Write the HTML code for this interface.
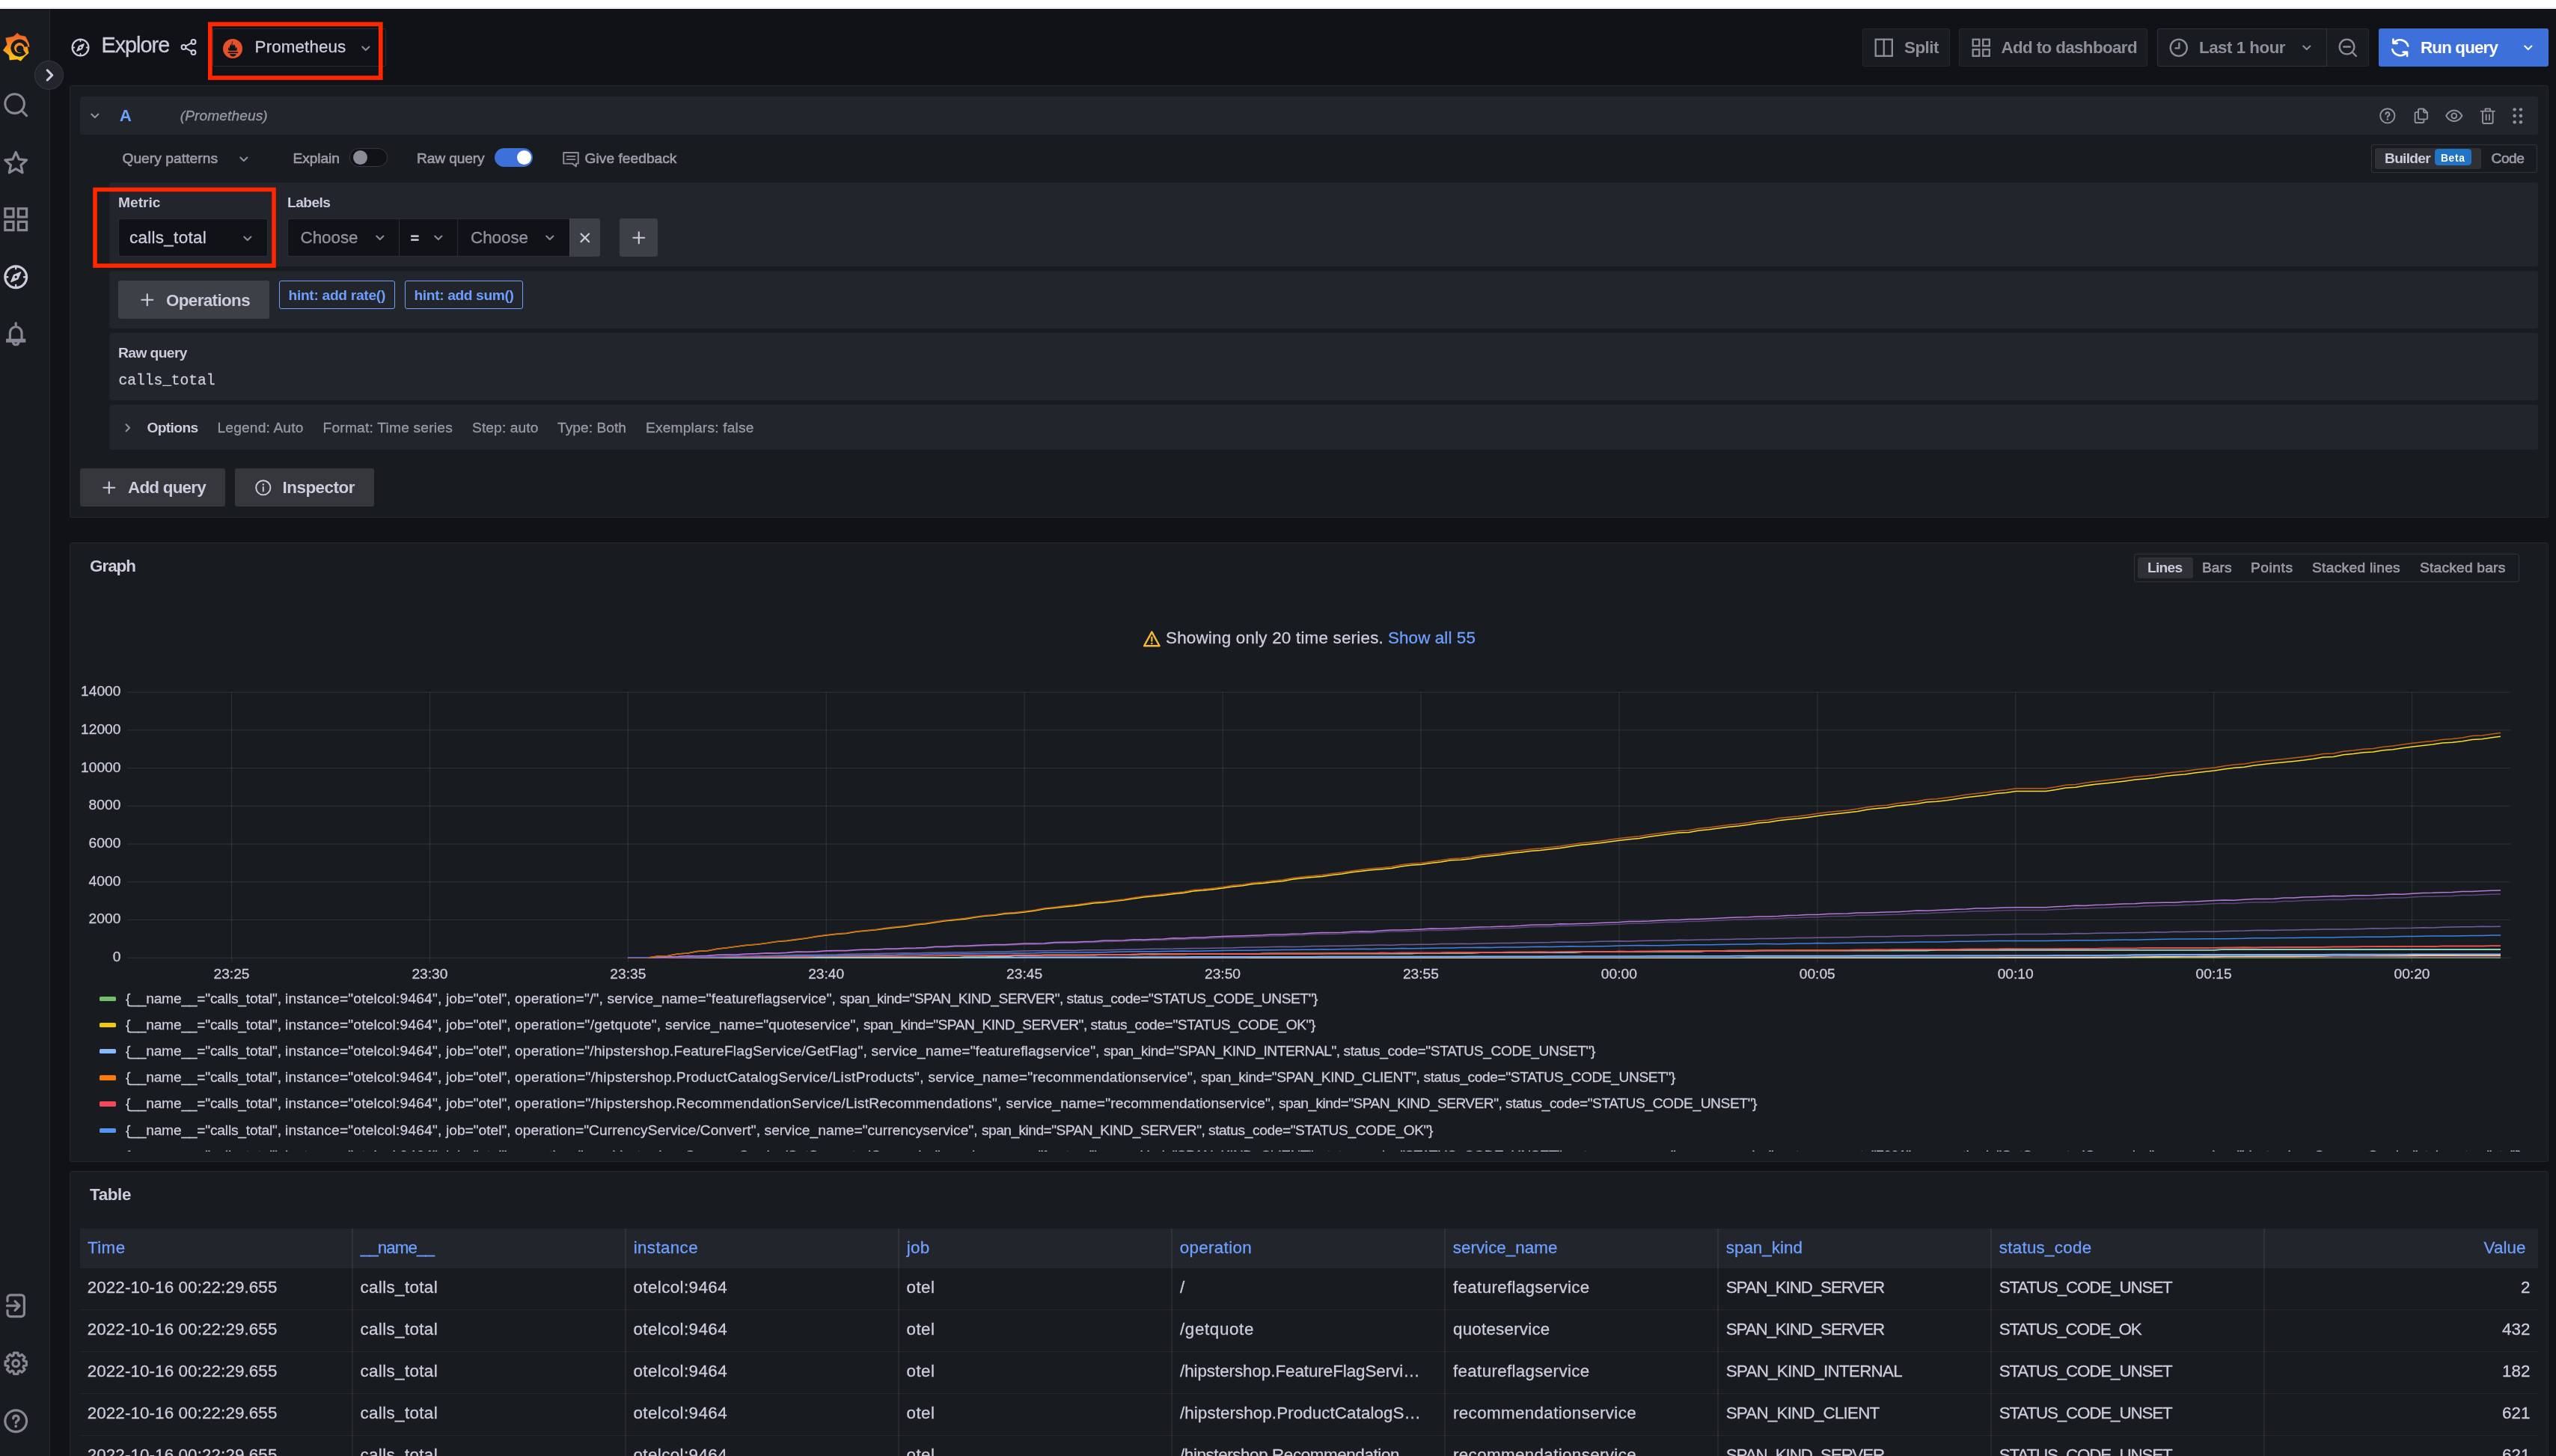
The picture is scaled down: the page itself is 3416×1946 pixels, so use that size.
<!DOCTYPE html>
<html lang="en"><head><meta charset="utf-8"><title>Explore - Grafana</title><style>
html,body{margin:0;padding:0;}
body{width:3416px;height:1946px;overflow:hidden;background:#111217;position:relative;font-family:"Liberation Sans",sans-serif;}
.a{position:absolute;box-sizing:border-box;}
.t{white-space:nowrap;}
#root{position:absolute;left:0;top:0;width:3416px;height:1946px;overflow:hidden;will-change:transform;}
svg{overflow:visible;}
</style></head><body><div id="root">
<div class="a" style="left:0px;top:0px;width:3416px;height:10px;background:#ffffff;"></div>
<div class="a" style="left:0px;top:10px;width:3416px;height:2px;background:#e6e6e6;"></div>
<div class="a" style="left:0px;top:12px;width:67px;height:1934px;background:#181b1f;border-right:1px solid rgba(204,204,220,0.07);"></div>
<div class="a" style="left:0px;top:12px;width:3416px;height:1px;background:rgba(0,0,0,0.45);"></div>
<svg class="a" style="left:3.5px;top:43.8px;" width="35.4" height="37.6" viewBox="95 210 955 1015"><defs><linearGradient id="lg" x1="0" y1="0" x2="0" y2="1"><stop offset="0" stop-color="#ef5a2a"/><stop offset="0.5" stop-color="#f8901f"/><stop offset="1" stop-color="#fcd116"/></linearGradient></defs><path d="M610 212L705 298L905 335L978 480L1032 610L1046 716L1002 742L992 775L1000 850L1022 940L860 1075L735 1222L615 1165L335 1186L312 1010L97 835L246 632L190 393L478 335Z" fill="url(#lg)" stroke="url(#lg)" stroke-width="8" stroke-linejoin="round"/><path d="M879.5 912.7A250 250 0 1 1 934.2 708.6" fill="none" stroke="#181b1f" stroke-width="124"/><path d="M770 850L850 950" stroke="#181b1f" stroke-width="120" stroke-linecap="butt"/><circle cx="706" cy="790" r="130" fill="#181b1f"/><path d="M985 690L1060 745L985 770Z" fill="#181b1f"/></svg>
<div class="a" style="left:46.2px;top:81px;width:39px;height:39px;background:#22252b;border:1px solid rgba(204,204,220,0.12);border-radius:20px;"></div>
<svg class="a" style="left:47.9px;top:82.0px;" width="37" height="37" viewBox="0 0 24 24"><g fill="#ccccdc" stroke="none"><path d="M14.83,11.29,10.59,7.05a1,1,0,0,0-1.42,0,1,1,0,0,0,0,1.41L12.71,12,9.17,15.54a1,1,0,0,0,0,1.41,1,1,0,0,0,.71.29,1,1,0,0,0,.71-.29l4.24-4.24A1,1,0,0,0,14.83,11.29Z"/></g></svg>
<svg class="a" style="left:2.3px;top:121.0px;" width="38.4" height="38.4" viewBox="0 0 24 24"><g fill="none" stroke="#ccccdc" stroke-width="1.9" stroke-linecap="round" stroke-linejoin="round" opacity="0.62"><circle cx="11" cy="11" r="8"/><path d="M16.9 16.9L21 21"/></g></svg>
<svg class="a" style="left:1.8px;top:198.3px;" width="38.4" height="38.4" viewBox="0 0 24 24"><g fill="none" stroke="#ccccdc" stroke-width="2" stroke-linecap="round" stroke-linejoin="round" opacity="0.62"><path d="M12.00 3.40L14.62 9.26L21.00 9.94L16.23 14.24L17.56 20.51L12.00 17.31L6.44 20.51L7.77 14.24L3.00 9.94L9.38 9.26Z"/></g></svg>
<svg class="a" style="left:1.8px;top:274.0px;" width="38.4" height="38.4" viewBox="0 0 24 24"><g fill="none" stroke="#ccccdc" stroke-width="2" stroke-linecap="round" stroke-linejoin="round" opacity="0.62"><g stroke-linejoin="miter"><rect x="3" y="3" width="7" height="7"/><rect x="14" y="3" width="7" height="7"/><rect x="3" y="14" width="7" height="7"/><rect x="14" y="14" width="7" height="7"/></g></g></svg>
<svg class="a" style="left:1.8px;top:351.1px;" width="38.4" height="38.4" viewBox="0 0 24 24"><g fill="none" stroke="#ccccdc" stroke-width="2" stroke-linecap="round" stroke-linejoin="round"><circle cx="12" cy="12" r="9"/><path d="M12 3.400v1.800M12 18.800v1.800M3.400 12h1.800M18.800 12h1.800" stroke-width="1.500"/><path d="M15.900 8.100l-2.300 5.500-5.500 2.300 2.300-5.500z" fill="#ccccdc" stroke-width="1"/><circle cx="12" cy="12" r="1" fill="#181b1f" stroke="none"/></g></svg>
<svg class="a" style="left:1.8px;top:427.3px;" width="38.4" height="38.4" viewBox="0 0 24 24"><g fill="none" stroke="#ccccdc" stroke-width="2" stroke-linecap="round" stroke-linejoin="round" opacity="0.62"><path d="M12 3v2M7.100 16.600V11a4.900 4.900 0 0 1 9.800 0v5.600"/><path d="M4.800 17.100h14.400v1.100H4.800zM9.700 19.400a2.400 2.400 0 0 0 4.600 0" stroke-linejoin="miter"/></g></svg>
<svg class="a" style="left:1.8px;top:1725.8px;" width="38.4" height="38.4" viewBox="0 0 24 24"><g fill="none" stroke="#ccccdc" stroke-width="2" stroke-linecap="round" stroke-linejoin="round" opacity="0.62"><path d="M5 8.200V5.500A2.500 2.500 0 0 1 7.500 3h9A2.500 2.500 0 0 1 19 5.500v13a2.500 2.500 0 0 1-2.500 2.500h-9A2.500 2.500 0 0 1 5 18.500v-2.700M4.600 12h10M11.300 8.200L15 12l-3.700 3.800"/></g></svg>
<svg class="a" style="left:1.8px;top:1802.8px;" width="38.4" height="38.4" viewBox="0 0 24 24"><g fill="none" stroke="#ccccdc" stroke-width="2" stroke-linecap="round" stroke-linejoin="round" opacity="0.62"><path d="M10.30 3.16L13.70 3.16L14.04 5.41L15.22 5.90L17.05 4.55L19.45 6.95L18.10 8.78L18.59 9.96L20.84 10.30L20.84 13.70L18.59 14.04L18.10 15.22L19.45 17.05L17.05 19.45L15.22 18.10L14.04 18.59L13.70 20.84L10.30 20.84L9.96 18.59L8.78 18.10L6.95 19.45L4.55 17.05L5.90 15.22L5.41 14.04L3.16 13.70L3.16 10.30L5.41 9.96L5.90 8.78L4.55 6.95L6.95 4.55L8.78 5.90L9.96 5.41Z"/><circle cx="12" cy="12" r="2.700"/></g></svg>
<svg class="a" style="left:1.8px;top:1879.8px;" width="38.4" height="38.4" viewBox="0 0 24 24"><g fill="none" stroke="#ccccdc" stroke-width="2" stroke-linecap="round" stroke-linejoin="round" opacity="0.62"><circle cx="12" cy="12" r="9"/><path d="M9.800 9.900a2.300 2.300 0 1 1 3.400 2c-.7.450-1.200.9-1.200 1.700" stroke-width="2"/><circle cx="12" cy="16.400" r=".6" stroke-width="1.200"/></g></svg>
<svg class="a" style="left:93.0px;top:49.0px;" width="29" height="29" viewBox="0 0 24 24"><g fill="none" stroke="#ccccdc" stroke-width="1.9" stroke-linecap="round" stroke-linejoin="round"><circle cx="12" cy="12" r="9"/><path d="M12 3.400v1.800M12 18.800v1.800M3.400 12h1.800M18.800 12h1.800" stroke-width="1.500"/><path d="M15.900 8.100l-2.300 5.500-5.500 2.300 2.300-5.500z" fill="#ccccdc" stroke-width="1"/><circle cx="12" cy="12" r="1" fill="#111217" stroke="none"/></g></svg>
<span class="a t" id="t1" style="top:38.6px;line-height:43px;height:43px;font-size:28.8px;color:#ccccdc;left:135.4px;-webkit-text-stroke:0.3px currentColor;letter-spacing:-0.963px;">Explore</span>
<svg class="a" style="left:239.0px;top:50.2px;" width="26" height="26" viewBox="0 0 24 24"><g fill="none" stroke="#ccccdc" stroke-width="1.9" stroke-linecap="round" stroke-linejoin="round"><circle cx="18" cy="5.5" r="2.7"/><circle cx="6" cy="12" r="2.7"/><circle cx="18" cy="18.5" r="2.7"/><path d="M8.4 10.7l7.2-3.9M8.4 13.3l7.2 3.9"/></g></svg>
<div class="a" style="left:284.4px;top:38px;width:231.6px;height:51.2px;background:#111217;border:1px solid rgba(204,204,220,0.15);border-radius:3px;"></div>
<svg class="a" style="left:298px;top:51.6px;" width="26" height="26" viewBox="0 0 24 24"><circle cx="12" cy="12" r="12" fill="#e6522c"/><g transform="translate(12 0) scale(1.2 1) translate(-12 0)"><path d="M12 2.200c.4 1.600-.5 2.500-.5 3.800 0 1 .9 1.700 1 2.900.5-.8.4-1.700.3-2.400 1.500 1.400 2.600 3.300 1.600 5.500.9-.4 1.200-1.300 1.300-2.100 1.100 1.600.9 3.400.2 4.700H8.100c-.7-1.200-1.100-2.600-.4-4.400.2.800.600 1.400 1.200 1.800-.6-2.200.3-4.100 1.600-5.200-.1 1 .1 1.700.5 2.200C10.700 7 10.600 4.300 12 2.200z" fill="#111217"/></g><rect x="6.200" y="15.900" width="12.300" height="1.700" fill="#111217"/><path d="M8.300 18.600h8.100c-.4 1.700-2 3-4.050 3s-3.650-1.300-4.050-3z" fill="#111217"/></svg>
<span class="a t" id="t2" style="top:46.0px;line-height:34px;height:34px;font-size:22.4px;color:#ccccdc;left:340.6px;-webkit-text-stroke:0.3px currentColor;letter-spacing:0.107px;">Prometheus</span>
<svg class="a" style="left:476.2px;top:52.2px;" width="25.6" height="25.6" viewBox="0 0 24 24"><g fill="#ccccdc" stroke="none" opacity="0.65"><path d="M17,9.17a1,1,0,0,0-1.41,0L12,12.71,8.46,9.17a1,1,0,0,0-1.41,0,1,1,0,0,0,0,1.42l4.24,4.24a1,1,0,0,0,1.42,0L17,10.59A1,1,0,0,0,17,9.17Z"/></g></svg>
<svg class="a" style="left:0px;top:0px;" width="3416" height="1946" viewBox="0 0 3416 1946"><rect x="280.85" y="32.3" width="227.9" height="71.7" fill="none" stroke="#ff2600" stroke-width="5.7"/></svg>
<div class="a" style="left:2489.4px;top:38px;width:116.4px;height:51.2px;background:#181b1f;border:1px solid rgba(204,204,220,0.07);border-radius:3px;"></div>
<svg class="a" style="left:2502.8px;top:48.8px;" width="29.5" height="29.5" viewBox="0 0 24 24"><g fill="none" stroke="#ccccdc" stroke-width="1.9" stroke-linecap="round" stroke-linejoin="round" opacity="0.65"><g stroke-linejoin="miter"><rect x="3" y="3" width="18" height="18"/><path d="M12 3v18"/></g></g></svg>
<span class="a t" id="t3" style="top:47.0px;line-height:34px;height:34px;font-size:22.4px;color:rgba(204,204,220,0.65);left:2545px;font-weight:bold;letter-spacing:-0.503px;">Split</span>
<div class="a" style="left:2618px;top:38px;width:252px;height:51.2px;background:#181b1f;border:1px solid rgba(204,204,220,0.07);border-radius:3px;"></div>
<svg class="a" style="left:2632.8px;top:48.8px;" width="29.5" height="29.5" viewBox="0 0 24 24"><g fill="none" stroke="#ccccdc" stroke-width="1.9" stroke-linecap="round" stroke-linejoin="round" opacity="0.65"><g stroke-linejoin="miter"><rect x="3" y="3" width="7" height="7"/><rect x="14" y="3" width="7" height="7"/><rect x="3" y="14" width="7" height="7"/><rect x="14" y="14" width="7" height="7"/></g></g></svg>
<span class="a t" id="t4" style="top:47.0px;line-height:34px;height:34px;font-size:22.4px;color:rgba(204,204,220,0.65);left:2674.4px;font-weight:bold;letter-spacing:-0.623px;">Add to dashboard</span>
<div class="a" style="left:2883px;top:38px;width:226.5px;height:51.2px;background:#181b1f;border:1px solid rgba(204,204,220,0.07);border-radius:3px;"></div>
<div class="a" style="left:3108.5px;top:38px;width:57px;height:51.2px;background:#181b1f;border:1px solid rgba(204,204,220,0.07);border-radius:3px;border-top-left-radius:0;border-bottom-left-radius:0;"></div>
<div class="a" style="left:2883px;top:38px;width:226.5px;height:51.2px;border:1px solid rgba(204,204,220,0.07);border-radius:3px;border-top-right-radius:0;border-bottom-right-radius:0;"></div>
<svg class="a" style="left:2896.8px;top:48.8px;" width="29.5" height="29.5" viewBox="0 0 24 24"><g fill="none" stroke="#ccccdc" stroke-width="1.9" stroke-linecap="round" stroke-linejoin="round" opacity="0.65"><circle cx="12" cy="12" r="9"/><path d="M12.500 7v5.500H8.500"/></g></svg>
<span class="a t" id="t5" style="top:47.0px;line-height:34px;height:34px;font-size:22.4px;color:rgba(204,204,220,0.65);left:2939px;font-weight:bold;letter-spacing:-0.517px;">Last 1 hour</span>
<svg class="a" style="left:3070.2px;top:50.7px;" width="25.6" height="25.6" viewBox="0 0 24 24"><g fill="#ccccdc" stroke="none" opacity="0.65"><path d="M17,9.17a1,1,0,0,0-1.41,0L12,12.71,8.46,9.17a1,1,0,0,0-1.41,0,1,1,0,0,0,0,1.42l4.24,4.24a1,1,0,0,0,1.42,0L17,10.59A1,1,0,0,0,17,9.17Z"/></g></svg>
<svg class="a" style="left:3122.8px;top:48.8px;" width="29.5" height="29.5" viewBox="0 0 24 24"><g fill="none" stroke="#ccccdc" stroke-width="1.9" stroke-linecap="round" stroke-linejoin="round" opacity="0.65"><circle cx="11" cy="11" r="8"/><path d="M16.900 16.900L21 21M7.500 11h7"/></g></svg>
<div class="a" style="left:3179px;top:38px;width:226.5px;height:51.2px;background:#3d71d9;border-radius:3px;"></div>
<svg class="a" style="left:3193.2px;top:48.8px;" width="29.5" height="29.5" viewBox="0 0 24 24"><g fill="none" stroke="#ffffff" stroke-width="2.1" stroke-linecap="round" stroke-linejoin="round"><g transform="translate(24,0) scale(-1,1)"><path d="M3.400 10.200A9 9 0 0 1 19 6.800M19.600 2.800v4.400H15.200M20.600 13.800A9 9 0 0 1 5 17.200M4.400 21.200v-4.400H8.800"/></g></g></svg>
<span class="a t" id="t6" style="top:47.0px;line-height:34px;height:34px;font-size:22.4px;color:#ffffff;left:3235px;font-weight:bold;letter-spacing:-0.858px;">Run query</span>
<svg class="a" style="left:3366.2px;top:50.7px;" width="25.6" height="25.6" viewBox="0 0 24 24"><g fill="#ffffff" stroke="none"><path d="M17,9.17a1,1,0,0,0-1.41,0L12,12.71,8.46,9.17a1,1,0,0,0-1.41,0,1,1,0,0,0,0,1.42l4.24,4.24a1,1,0,0,0,1.42,0L17,10.59A1,1,0,0,0,17,9.17Z"/></g></svg>
<div class="a" style="left:93px;top:114px;width:3312.5px;height:578px;background:#181b1f;border:1px solid rgba(204,204,220,0.07);border-radius:3px;"></div>
<div class="a" style="left:106.8px;top:129px;width:3284.8px;height:50.8px;background:#22252b;border-radius:3px;"></div>
<svg class="a" style="left:113.7px;top:141.6px;" width="25.6" height="25.6" viewBox="0 0 24 24"><g fill="#ccccdc" stroke="none" opacity="0.65"><path d="M17,9.17a1,1,0,0,0-1.41,0L12,12.71,8.46,9.17a1,1,0,0,0-1.41,0,1,1,0,0,0,0,1.42l4.24,4.24a1,1,0,0,0,1.42,0L17,10.59A1,1,0,0,0,17,9.17Z"/></g></svg>
<span class="a t" id="t7" style="top:137.8px;line-height:34px;height:34px;font-size:22.4px;color:#6e9fff;left:159.8px;font-weight:bold;letter-spacing:-0.772px;">A</span>
<span class="a t" id="t8" style="top:139.8px;line-height:29px;height:29px;font-size:19.2px;color:rgba(204,204,220,0.65);left:240.8px;-webkit-text-stroke:0.3px currentColor;font-style:italic;letter-spacing:0.064px;">(Prometheus)</span>
<svg class="a" style="left:3177.6px;top:141.5px;" width="25.6" height="25.6" viewBox="0 0 24 24"><g fill="none" stroke="#ccccdc" stroke-width="1.8" stroke-linecap="round" stroke-linejoin="round" opacity="0.65"><circle cx="12" cy="12" r="9"/><path d="M9.800 9.900a2.300 2.300 0 1 1 3.400 2c-.7.450-1.200.9-1.200 1.700" stroke-width="2"/><circle cx="12" cy="16.400" r=".6" stroke-width="1.200"/></g></svg>
<svg class="a" style="left:3222.5px;top:141.5px;" width="25.6" height="25.6" viewBox="0 0 24 24"><g fill="none" stroke="#ccccdc" stroke-width="1.8" stroke-linecap="round" stroke-linejoin="round" opacity="0.65"><path d="M10 3.300h5.200l4.600 4.600v6.800a1.600 1.600 0 0 1-1.600 1.600H10a1.600 1.600 0 0 1-1.600-1.600V4.900A1.600 1.600 0 0 1 10 3.300zM15 3.600v3a1.300 1.300 0 0 0 1.300 1.300h3.200"/><path d="M8.400 7.400H5.900a1.600 1.600 0 0 0-1.600 1.600v10.100a1.600 1.600 0 0 0 1.600 1.600h7.900a1.600 1.600 0 0 0 1.600-1.600v-2.600"/></g></svg>
<svg class="a" style="left:3266.9px;top:141.5px;" width="25.6" height="25.6" viewBox="0 0 24 24"><g fill="none" stroke="#ccccdc" stroke-width="1.8" stroke-linecap="round" stroke-linejoin="round" opacity="0.65"><path d="M2 12c2.6-4.6 6-6.8 10-6.8S19.400 7.400 22 12c-2.600 4.600-6 6.800-10 6.800S4.600 16.600 2 12z"/><circle cx="12" cy="12" r="3.2"/></g></svg>
<svg class="a" style="left:3311.8px;top:141.5px;" width="25.6" height="25.6" viewBox="0 0 24 24"><g fill="none" stroke="#ccccdc" stroke-width="1.8" stroke-linecap="round" stroke-linejoin="round" opacity="0.65"><path d="M3.4 6.2h17.2M9 6V3.200h6V6M5.600 6.400v13.400a1.800 1.800 0 0 0 1.800 1.800h9.200a1.800 1.800 0 0 0 1.800-1.800V6.400M10 10.600v6.400M14 10.600v6.400"/></g></svg>
<svg class="a" style="left:3351.5px;top:141.8px;" width="25.6" height="25.6" viewBox="0 0 24 24"><g fill="#ccccdc" stroke="none" opacity="0.65"><circle cx="8.1" cy="4.1" r="2.1"/><circle cx="8.1" cy="12" r="2.1"/><circle cx="8.1" cy="19.9" r="2.1"/><circle cx="15.9" cy="4.1" r="2.1"/><circle cx="15.9" cy="12" r="2.1"/><circle cx="15.9" cy="19.9" r="2.1"/></g></svg>
<span class="a t" id="t9" style="top:196.6px;line-height:29px;height:29px;font-size:19.2px;color:rgba(204,204,220,0.65);left:163.4px;-webkit-text-stroke:0.6px currentColor;letter-spacing:0.063px;">Query patterns</span>
<svg class="a" style="left:312.9px;top:199.7px;" width="25.6" height="25.6" viewBox="0 0 24 24"><g fill="#ccccdc" stroke="none" opacity="0.65"><path d="M17,9.17a1,1,0,0,0-1.41,0L12,12.71,8.46,9.17a1,1,0,0,0-1.41,0,1,1,0,0,0,0,1.42l4.24,4.24a1,1,0,0,0,1.42,0L17,10.59A1,1,0,0,0,17,9.17Z"/></g></svg>
<span class="a t" id="t10" style="top:196.6px;line-height:29px;height:29px;font-size:19.2px;color:rgba(204,204,220,0.65);left:391.6px;-webkit-text-stroke:0.6px currentColor;letter-spacing:-0.120px;">Explain</span>
<div class="a" style="left:467.2px;top:197.6px;width:50.8px;height:25.6px;background:#111217;border:1px solid rgba(204,204,220,0.2);border-radius:13px;"></div>
<div class="a" style="left:471.8px;top:200.6px;width:19.6px;height:19.6px;background:rgba(204,204,220,0.65);border-radius:10px;"></div>
<span class="a t" id="t11" style="top:196.6px;line-height:29px;height:29px;font-size:19.2px;color:rgba(204,204,220,0.65);left:557.1px;-webkit-text-stroke:0.6px currentColor;letter-spacing:-0.147px;">Raw query</span>
<div class="a" style="left:661px;top:197.6px;width:51.2px;height:25.6px;background:#3d71d9;border-radius:13px;"></div>
<div class="a" style="left:690.6px;top:200.6px;width:19.6px;height:19.6px;background:#ffffff;border-radius:10px;"></div>
<svg class="a" style="left:750.0px;top:199.8px;" width="26" height="26" viewBox="0 0 24 24"><g fill="none" stroke="#ccccdc" stroke-width="1.8" stroke-linecap="round" stroke-linejoin="round" opacity="0.65"><path d="M3 3.6h18v13.600h-2.600v3.600l-4.600-3.600H3z"/><path d="M7 8.200h10M7 12.200h10" stroke-width="1.6"/></g></svg>
<span class="a t" id="t12" style="top:196.6px;line-height:29px;height:29px;font-size:19.2px;color:rgba(204,204,220,0.65);left:781.6px;-webkit-text-stroke:0.6px currentColor;letter-spacing:0.018px;">Give feedback</span>
<div class="a" style="left:3169.2px;top:193.3px;width:222.3px;height:37.4px;border:1px solid rgba(204,204,220,0.15);border-radius:3px;"></div>
<div class="a" style="left:3174px;top:197.8px;width:141.7px;height:28px;background:rgba(204,204,220,0.12);border-radius:3px;"></div>
<span class="a t" id="t13" style="top:197.1px;line-height:29px;height:29px;font-size:19.2px;color:#ccccdc;left:3187px;font-weight:bold;letter-spacing:-0.730px;">Builder</span>
<div class="a" style="left:3254px;top:199px;width:48.8px;height:21.5px;background:#2174c4;border-radius:4.5px;"></div>
<span class="a t" id="t14" style="top:200.9px;line-height:21px;height:21px;font-size:13.8px;color:#ffffff;left:3262px;font-weight:bold;letter-spacing:0.648px;">Beta</span>
<span class="a t" id="t15" style="top:197.1px;line-height:29px;height:29px;font-size:19.2px;color:rgba(204,204,220,0.65);left:3329.5px;-webkit-text-stroke:0.6px currentColor;letter-spacing:-0.469px;">Code</span>
<div class="a" style="left:146px;top:244px;width:3246px;height:111.5px;background:#22252b;border-radius:3px;"></div>
<span class="a t" id="t16" style="top:256.1px;line-height:29px;height:29px;font-size:19.2px;color:#ccccdc;left:158px;font-weight:bold;letter-spacing:-0.003px;">Metric</span>
<div class="a" style="left:158px;top:292.3px;width:199.5px;height:50.4px;background:#111217;border:1px solid rgba(204,204,220,0.15);border-radius:3px;"></div>
<span class="a t" id="t17" style="top:300.6px;line-height:34px;height:34px;font-size:22.4px;color:#ccccdc;left:173px;-webkit-text-stroke:0.3px currentColor;letter-spacing:0.311px;">calls_total</span>
<svg class="a" style="left:318.2px;top:306.2px;" width="25.6" height="25.6" viewBox="0 0 24 24"><g fill="#ccccdc" stroke="none" opacity="0.65"><path d="M17,9.17a1,1,0,0,0-1.41,0L12,12.71,8.46,9.17a1,1,0,0,0-1.41,0,1,1,0,0,0,0,1.42l4.24,4.24a1,1,0,0,0,1.42,0L17,10.59A1,1,0,0,0,17,9.17Z"/></g></svg>
<span class="a t" id="t18" style="top:256.1px;line-height:29px;height:29px;font-size:19.2px;color:#ccccdc;left:384px;font-weight:bold;letter-spacing:-0.549px;">Labels</span>
<div class="a" style="left:384px;top:292.3px;width:378px;height:50.4px;background:#111217;border:1px solid rgba(204,204,220,0.15);border-radius:3px;border-top-right-radius:0;border-bottom-right-radius:0;"></div>
<div class="a" style="left:533px;top:293px;width:1.2px;height:49px;background:rgba(204,204,220,0.15);"></div>
<div class="a" style="left:611px;top:293px;width:1.2px;height:49px;background:rgba(204,204,220,0.15);"></div>
<span class="a t" id="t19" style="top:300.6px;line-height:34px;height:34px;font-size:22.4px;color:rgba(204,204,220,0.65);left:401.5px;-webkit-text-stroke:0.3px currentColor;letter-spacing:-0.031px;">Choose</span>
<svg class="a" style="left:494.7px;top:305.2px;" width="25.6" height="25.6" viewBox="0 0 24 24"><g fill="#ccccdc" stroke="none" opacity="0.65"><path d="M17,9.17a1,1,0,0,0-1.41,0L12,12.71,8.46,9.17a1,1,0,0,0-1.41,0,1,1,0,0,0,0,1.42l4.24,4.24a1,1,0,0,0,1.42,0L17,10.59A1,1,0,0,0,17,9.17Z"/></g></svg>
<span class="a t" id="t20" style="top:302.6px;line-height:30px;height:30px;font-size:20px;color:#ccccdc;left:548.5px;-webkit-text-stroke:0.6px currentColor;letter-spacing:-0.888px;">=</span>
<svg class="a" style="left:572.7px;top:305.2px;" width="25.6" height="25.6" viewBox="0 0 24 24"><g fill="#ccccdc" stroke="none" opacity="0.65"><path d="M17,9.17a1,1,0,0,0-1.41,0L12,12.71,8.46,9.17a1,1,0,0,0-1.41,0,1,1,0,0,0,0,1.42l4.24,4.24a1,1,0,0,0,1.42,0L17,10.59A1,1,0,0,0,17,9.17Z"/></g></svg>
<span class="a t" id="t21" style="top:300.6px;line-height:34px;height:34px;font-size:22.4px;color:rgba(204,204,220,0.65);left:629px;-webkit-text-stroke:0.3px currentColor;letter-spacing:-0.031px;">Choose</span>
<svg class="a" style="left:722.2px;top:305.2px;" width="25.6" height="25.6" viewBox="0 0 24 24"><g fill="#ccccdc" stroke="none" opacity="0.65"><path d="M17,9.17a1,1,0,0,0-1.41,0L12,12.71,8.46,9.17a1,1,0,0,0-1.41,0,1,1,0,0,0,0,1.42l4.24,4.24a1,1,0,0,0,1.42,0L17,10.59A1,1,0,0,0,17,9.17Z"/></g></svg>
<div class="a" style="left:761px;top:292.3px;width:41px;height:50.7px;background:rgba(204,204,220,0.16);border-radius:0 3px 3px 0;"></div>
<svg class="a" style="left:768.7px;top:304.7px;" width="25.6" height="25.6" viewBox="0 0 24 24"><g fill="#ccccdc" stroke="none"><path d="M13.41,12l4.3-4.29a1,1,0,1,0-1.42-1.42L12,10.59,7.71,6.29A1,1,0,0,0,6.29,7.71L10.59,12l-4.3,4.29a1,1,0,0,0,0,1.42,1,1,0,0,0,1.42,0L12,13.41l4.29,4.3a1,1,0,0,0,1.42,0,1,1,0,0,0,0-1.42Z"/></g></svg>
<div class="a" style="left:828px;top:292.3px;width:51.2px;height:50.7px;background:rgba(204,204,220,0.16);border-radius:3px;"></div>
<svg class="a" style="left:840.8px;top:304.7px;" width="25.6" height="25.6" viewBox="0 0 24 24"><g fill="#ccccdc" stroke="none"><path d="M19,11H13V5a1,1,0,0,0-2,0v6H5a1,1,0,0,0,0,2h6v6a1,1,0,0,0,2,0V13h6a1,1,0,0,0,0-2Z"/></g></svg>
<svg class="a" style="left:0px;top:0px;" width="3416" height="1946" viewBox="0 0 3416 1946"><rect x="127" y="253.4" width="239" height="101.7" fill="none" stroke="#ff2600" stroke-width="5.6"/></svg>
<div class="a" style="left:146px;top:362px;width:3246px;height:76.5px;background:#22252b;border-radius:3px;"></div>
<div class="a" style="left:158px;top:375px;width:202px;height:51.2px;background:rgba(204,204,220,0.16);border-radius:3px;"></div>
<svg class="a" style="left:183.7px;top:387.7px;" width="25.6" height="25.6" viewBox="0 0 24 24"><g fill="#ccccdc" stroke="none"><path d="M19,11H13V5a1,1,0,0,0-2,0v6H5a1,1,0,0,0,0,2h6v6a1,1,0,0,0,2,0V13h6a1,1,0,0,0,0-2Z"/></g></svg>
<span class="a t" id="t22" style="top:384.6px;line-height:34px;height:34px;font-size:22.4px;color:#ccccdc;left:222px;font-weight:bold;letter-spacing:-0.620px;">Operations</span>
<div class="a" style="left:373px;top:375px;width:155px;height:38.4px;border:1.6px solid #6e9fff;border-radius:3px;"></div>
<span class="a t" id="t23" style="top:380.4px;line-height:29px;height:29px;font-size:19.2px;color:#6e9fff;left:385.5px;font-weight:bold;letter-spacing:-0.301px;">hint: add rate()</span>
<div class="a" style="left:541px;top:375px;width:158px;height:38.4px;border:1.6px solid #6e9fff;border-radius:3px;"></div>
<span class="a t" id="t24" style="top:380.4px;line-height:29px;height:29px;font-size:19.2px;color:#6e9fff;left:553.5px;font-weight:bold;letter-spacing:-0.371px;">hint: add sum()</span>
<div class="a" style="left:146px;top:445px;width:3246px;height:89.5px;background:#22252b;border-radius:3px;"></div>
<span class="a t" id="t25" style="top:457.1px;line-height:29px;height:29px;font-size:19.2px;color:#ccccdc;left:158px;font-weight:bold;letter-spacing:-0.561px;">Raw query</span>
<span class="a t" id="t26" style="top:495.1px;line-height:29px;height:29px;font-size:19.6px;color:#ccccdc;left:158.5px;-webkit-text-stroke:0.3px currentColor;font-family:'Liberation Mono',monospace;letter-spacing:-0.031px;">calls_total</span>
<div class="a" style="left:146px;top:541px;width:3246px;height:59.5px;background:#22252b;border-radius:3px;"></div>
<svg class="a" style="left:157.7px;top:559.2px;" width="25.6" height="25.6" viewBox="0 0 24 24"><g fill="#ccccdc" stroke="none" opacity="0.65"><path d="M14.83,11.29,10.59,7.05a1,1,0,0,0-1.42,0,1,1,0,0,0,0,1.41L12.71,12,9.17,15.54a1,1,0,0,0,0,1.41,1,1,0,0,0,.71.29,1,1,0,0,0,.71-.29l4.24-4.24A1,1,0,0,0,14.83,11.29Z"/></g></svg>
<span class="a t" id="t27" style="top:556.7px;line-height:29px;height:29px;font-size:19.2px;color:#ccccdc;left:196.5px;font-weight:bold;letter-spacing:-0.641px;">Options</span>
<span class="a t" id="t28" style="top:556.7px;line-height:29px;height:29px;font-size:19.2px;color:rgba(204,204,220,0.65);left:290.5px;-webkit-text-stroke:0.3px currentColor;letter-spacing:0.158px;">Legend: Auto</span>
<span class="a t" id="t29" style="top:556.7px;line-height:29px;height:29px;font-size:19.2px;color:rgba(204,204,220,0.65);left:431.5px;-webkit-text-stroke:0.3px currentColor;letter-spacing:0.209px;">Format: Time series</span>
<span class="a t" id="t30" style="top:556.7px;line-height:29px;height:29px;font-size:19.2px;color:rgba(204,204,220,0.65);left:631px;-webkit-text-stroke:0.3px currentColor;letter-spacing:0.102px;">Step: auto</span>
<span class="a t" id="t31" style="top:556.7px;line-height:29px;height:29px;font-size:19.2px;color:rgba(204,204,220,0.65);left:745px;-webkit-text-stroke:0.3px currentColor;letter-spacing:0.027px;">Type: Both</span>
<span class="a t" id="t32" style="top:556.7px;line-height:29px;height:29px;font-size:19.2px;color:rgba(204,204,220,0.65);left:863px;-webkit-text-stroke:0.3px currentColor;letter-spacing:0.167px;">Exemplars: false</span>
<div class="a" style="left:107px;top:626px;width:194px;height:51.2px;background:rgba(204,204,220,0.16);border-radius:3px;"></div>
<svg class="a" style="left:132.7px;top:638.7px;" width="25.6" height="25.6" viewBox="0 0 24 24"><g fill="#ccccdc" stroke="none"><path d="M19,11H13V5a1,1,0,0,0-2,0v6H5a1,1,0,0,0,0,2h6v6a1,1,0,0,0,2,0V13h6a1,1,0,0,0,0-2Z"/></g></svg>
<span class="a t" id="t33" style="top:635.4px;line-height:34px;height:34px;font-size:22.4px;color:#ccccdc;left:171px;font-weight:bold;letter-spacing:-0.747px;">Add query</span>
<div class="a" style="left:314px;top:626px;width:186px;height:51.2px;background:rgba(204,204,220,0.16);border-radius:3px;"></div>
<svg class="a" style="left:338.7px;top:638.7px;" width="25.6" height="25.6" viewBox="0 0 24 24"><g fill="none" stroke="#ccccdc" stroke-width="1.8" stroke-linecap="round" stroke-linejoin="round"><circle cx="12" cy="12" r="9"/><path d="M12 11.200v5.300"/><circle cx="12" cy="8" r=".5" stroke-width="1.300"/></g></svg>
<span class="a t" id="t34" style="top:635.4px;line-height:34px;height:34px;font-size:22.4px;color:#ccccdc;left:377.5px;font-weight:bold;letter-spacing:-0.476px;">Inspector</span>
<div class="a" style="left:93px;top:725px;width:3312.5px;height:827.5px;background:#181b1f;border:1px solid rgba(204,204,220,0.07);border-radius:3px;"></div>
<span class="a t" id="t35" style="top:739.6px;line-height:34px;height:34px;font-size:22.4px;color:#ccccdc;left:120px;font-weight:bold;letter-spacing:-0.988px;">Graph</span>
<div class="a" style="left:2852px;top:740px;width:514.5px;height:38.4px;border:1px solid rgba(204,204,220,0.15);border-radius:3px;"></div>
<div class="a" style="left:2857px;top:745px;width:73.5px;height:28.4px;background:rgba(204,204,220,0.12);border-radius:3px;"></div>
<span class="a t" id="t36" style="top:744.4px;line-height:29px;height:29px;font-size:19.2px;color:#ccccdc;left:2870px;font-weight:bold;letter-spacing:-0.725px;">Lines</span>
<span class="a t" id="t37" style="top:744.4px;line-height:29px;height:29px;font-size:19.2px;color:rgba(204,204,220,0.65);left:2943px;-webkit-text-stroke:0.6px currentColor;letter-spacing:0.012px;">Bars</span>
<span class="a t" id="t38" style="top:744.4px;line-height:29px;height:29px;font-size:19.2px;color:rgba(204,204,220,0.65);left:3008px;-webkit-text-stroke:0.6px currentColor;letter-spacing:0.529px;">Points</span>
<span class="a t" id="t39" style="top:744.4px;line-height:29px;height:29px;font-size:19.2px;color:rgba(204,204,220,0.65);left:3090px;-webkit-text-stroke:0.6px currentColor;letter-spacing:0.298px;">Stacked lines</span>
<span class="a t" id="t40" style="top:744.4px;line-height:29px;height:29px;font-size:19.2px;color:rgba(204,204,220,0.65);left:3234px;-webkit-text-stroke:0.6px currentColor;letter-spacing:0.208px;">Stacked bars</span>
<svg class="a" style="left:1526.1px;top:840.9px;" width="26.7" height="26.7" viewBox="0 0 24 24"><g fill="none" stroke="#f5b73d" stroke-width="2" stroke-linecap="round" stroke-linejoin="round"><path d="M12 3.200L21.200 20H2.800z" stroke-width="2.200"/><path d="M12 9.600v4.600" stroke-width="2"/><circle cx="12" cy="17.100" r=".5" stroke-width="1.400"/></g></svg>
<span class="a t" id="t41" style="top:835.6px;line-height:34px;height:34px;font-size:22.4px;color:#ccccdc;left:1558px;-webkit-text-stroke:0.3px currentColor;letter-spacing:0.214px;">Showing only 20 time series.</span>
<span class="a t" id="t42" style="top:835.6px;line-height:34px;height:34px;font-size:22.4px;color:#6e9fff;left:1855px;-webkit-text-stroke:0.3px currentColor;letter-spacing:0.112px;">Show all 55</span>
<svg class="a" style="left:0px;top:0px;pointer-events:none;" width="3416" height="1946" viewBox="0 0 3416 1946"><rect x="170" y="924.5" width="3185" height="1.3" fill="rgba(240,250,255,0.09)"/><rect x="170" y="975.2" width="3185" height="1.3" fill="rgba(240,250,255,0.09)"/><rect x="170" y="1025.9" width="3185" height="1.3" fill="rgba(240,250,255,0.09)"/><rect x="170" y="1076.6" width="3185" height="1.3" fill="rgba(240,250,255,0.09)"/><rect x="170" y="1127.4" width="3185" height="1.3" fill="rgba(240,250,255,0.09)"/><rect x="170" y="1178.1" width="3185" height="1.3" fill="rgba(240,250,255,0.09)"/><rect x="170" y="1228.8" width="3185" height="1.3" fill="rgba(240,250,255,0.09)"/><rect x="170" y="1279.5" width="3185" height="1.3" fill="rgba(240,250,255,0.09)"/><rect x="308.9" y="925" width="1.3" height="361" fill="rgba(240,250,255,0.09)"/><rect x="573.8" y="925" width="1.3" height="361" fill="rgba(240,250,255,0.09)"/><rect x="838.7" y="925" width="1.3" height="361" fill="rgba(240,250,255,0.09)"/><rect x="1103.6" y="925" width="1.3" height="361" fill="rgba(240,250,255,0.09)"/><rect x="1368.5" y="925" width="1.3" height="361" fill="rgba(240,250,255,0.09)"/><rect x="1633.5" y="925" width="1.3" height="361" fill="rgba(240,250,255,0.09)"/><rect x="1898.4" y="925" width="1.3" height="361" fill="rgba(240,250,255,0.09)"/><rect x="2163.3" y="925" width="1.3" height="361" fill="rgba(240,250,255,0.09)"/><rect x="2428.2" y="925" width="1.3" height="361" fill="rgba(240,250,255,0.09)"/><rect x="2693.1" y="925" width="1.3" height="361" fill="rgba(240,250,255,0.09)"/><rect x="2958.0" y="925" width="1.3" height="361" fill="rgba(240,250,255,0.09)"/><rect x="3222.9" y="925" width="1.3" height="361" fill="rgba(240,250,255,0.09)"/><polyline points="839.5,1280.0 852.8,1280.0 866.0,1280.0 879.2,1280.0 892.5,1280.0 905.8,1280.0 919.0,1280.0 932.2,1280.0 945.5,1280.0 958.8,1280.0 972.0,1280.0 985.2,1280.0 998.5,1280.0 1011.8,1280.0 1025.0,1280.0 1038.2,1280.0 1051.5,1280.0 1064.8,1280.0 1078.0,1280.0 1091.2,1280.0 1104.5,1280.0 1117.8,1280.0 1131.0,1280.0 1144.2,1280.0 1157.5,1280.0 1170.8,1280.0 1184.0,1280.0 1197.2,1280.0 1210.5,1280.0 1223.8,1280.0 1237.0,1280.0 1250.2,1280.0 1263.5,1280.0 1276.8,1280.0 1290.0,1280.0 1303.2,1280.0 1316.5,1280.0 1329.8,1280.0 1343.0,1280.0 1356.2,1280.0 1369.5,1280.0 1382.8,1280.0 1396.0,1280.0 1409.2,1280.0 1422.5,1280.0 1435.8,1280.0 1449.0,1280.0 1462.2,1280.0 1475.5,1280.0 1488.8,1280.0 1502.0,1280.0 1515.2,1280.0 1528.5,1280.0 1541.8,1280.0 1555.0,1280.0 1568.2,1280.0 1581.5,1280.0 1594.8,1280.0 1608.0,1280.0 1621.2,1280.0 1634.5,1280.0 1647.8,1280.0 1661.0,1280.0 1674.2,1280.0 1687.5,1280.0 1700.8,1280.0 1714.0,1280.0 1727.2,1280.0 1740.5,1280.0 1753.8,1280.0 1767.0,1280.0 1780.2,1280.0 1793.5,1280.0 1806.8,1280.0 1820.0,1280.0 1833.2,1280.0 1846.5,1280.0 1859.8,1280.0 1873.0,1280.0 1886.2,1280.0 1899.5,1280.0 1912.8,1280.0 1926.0,1280.0 1939.2,1280.0 1952.5,1280.0 1965.8,1280.0 1979.0,1280.0 1992.2,1280.0 2005.5,1280.0 2018.8,1280.0 2032.0,1280.0 2045.2,1280.0 2058.5,1280.0 2071.8,1280.0 2085.0,1280.0 2098.2,1280.0 2111.5,1280.0 2124.8,1280.0 2138.0,1280.0 2151.2,1280.0 2164.5,1280.0 2177.8,1280.0 2191.0,1280.0 2204.2,1280.0 2217.5,1280.0 2230.8,1280.0 2244.0,1280.0 2257.2,1280.0 2270.5,1280.0 2283.8,1280.0 2297.0,1280.0 2310.2,1280.0 2323.5,1280.0 2336.8,1280.0 2350.0,1280.0 2363.2,1280.0 2376.5,1280.0 2389.8,1280.0 2403.0,1280.0 2416.2,1280.0 2429.5,1280.0 2442.8,1280.0 2456.0,1280.0 2469.2,1280.0 2482.5,1280.0 2495.8,1280.0 2509.0,1280.0 2522.2,1280.0 2535.5,1280.0 2548.8,1280.0 2562.0,1280.0 2575.2,1280.0 2588.5,1280.0 2601.8,1280.0 2615.0,1280.0 2628.2,1280.0 2641.5,1280.0 2654.8,1280.0 2668.0,1280.0 2681.2,1280.0 2694.5,1280.0 2707.8,1280.0 2721.0,1280.0 2734.2,1280.0 2747.5,1280.0 2760.8,1280.0 2774.0,1280.0 2787.2,1280.0 2800.5,1280.0 2813.8,1280.0 2827.0,1280.0 2840.2,1280.0 2853.5,1280.0 2866.8,1280.0 2880.0,1280.0 2893.2,1280.0 2906.5,1280.0 2919.8,1280.0 2933.0,1280.0 2946.2,1280.0 2959.5,1279.9 2972.8,1279.9 2986.0,1279.9 2999.2,1279.9 3012.5,1279.9 3025.8,1279.9 3039.0,1279.9 3052.2,1279.9 3065.5,1279.9 3078.8,1279.9 3092.0,1279.9 3105.2,1279.9 3118.5,1279.9 3131.8,1279.9 3145.0,1279.9 3158.2,1279.9 3171.5,1279.9 3184.8,1279.9 3198.0,1279.9 3211.2,1279.9 3224.5,1279.9 3237.8,1279.9 3251.0,1279.9 3264.2,1279.9 3277.5,1279.9 3290.8,1279.9 3304.0,1279.9 3317.2,1279.9 3330.5,1279.9 3342.0,1279.9" fill="none" stroke="#73BF69" stroke-width="1.5" stroke-linejoin="round"/><polyline points="839.5,1280.0 852.8,1280.0 866.0,1280.0 879.2,1280.0 892.5,1280.0 905.8,1280.0 919.0,1280.0 932.2,1280.0 945.5,1280.0 958.8,1280.0 972.0,1280.0 985.2,1280.0 998.5,1280.0 1011.8,1279.9 1025.0,1279.9 1038.2,1279.9 1051.5,1279.9 1064.8,1279.9 1078.0,1279.8 1091.2,1279.8 1104.5,1279.8 1117.8,1279.8 1131.0,1279.8 1144.2,1279.8 1157.5,1279.8 1170.8,1279.8 1184.0,1279.8 1197.2,1279.8 1210.5,1279.8 1223.8,1279.8 1237.0,1279.8 1250.2,1279.8 1263.5,1279.8 1276.8,1279.8 1290.0,1279.8 1303.2,1279.8 1316.5,1279.8 1329.8,1279.8 1343.0,1279.8 1356.2,1279.8 1369.5,1279.8 1382.8,1279.8 1396.0,1279.8 1409.2,1279.8 1422.5,1279.8 1435.8,1279.8 1449.0,1279.8 1462.2,1279.8 1475.5,1279.8 1488.8,1279.8 1502.0,1279.8 1515.2,1279.8 1528.5,1279.7 1541.8,1279.7 1555.0,1279.7 1568.2,1279.7 1581.5,1279.7 1594.8,1279.7 1608.0,1279.7 1621.2,1279.7 1634.5,1279.6 1647.8,1279.6 1661.0,1279.6 1674.2,1279.6 1687.5,1279.6 1700.8,1279.6 1714.0,1279.6 1727.2,1279.6 1740.5,1279.6 1753.8,1279.6 1767.0,1279.6 1780.2,1279.6 1793.5,1279.6 1806.8,1279.6 1820.0,1279.6 1833.2,1279.6 1846.5,1279.5 1859.8,1279.5 1873.0,1279.5 1886.2,1279.5 1899.5,1279.5 1912.8,1279.5 1926.0,1279.5 1939.2,1279.5 1952.5,1279.5 1965.8,1279.4 1979.0,1279.4 1992.2,1279.4 2005.5,1279.4 2018.8,1279.4 2032.0,1279.4 2045.2,1279.4 2058.5,1279.4 2071.8,1279.4 2085.0,1279.4 2098.2,1279.4 2111.5,1279.4 2124.8,1279.4 2138.0,1279.4 2151.2,1279.4 2164.5,1279.4 2177.8,1279.4 2191.0,1279.4 2204.2,1279.4 2217.5,1279.3 2230.8,1279.3 2244.0,1279.3 2257.2,1279.3 2270.5,1279.3 2283.8,1279.3 2297.0,1279.3 2310.2,1279.2 2323.5,1279.2 2336.8,1279.2 2350.0,1279.2 2363.2,1279.1 2376.5,1279.1 2389.8,1279.1 2403.0,1279.1 2416.2,1279.1 2429.5,1279.1 2442.8,1279.1 2456.0,1279.1 2469.2,1279.1 2482.5,1279.1 2495.8,1279.1 2509.0,1279.1 2522.2,1279.0 2535.5,1279.0 2548.8,1279.0 2562.0,1279.0 2575.2,1279.0 2588.5,1279.0 2601.8,1279.0 2615.0,1279.0 2628.2,1279.0 2641.5,1279.0 2654.8,1278.9 2668.0,1278.9 2681.2,1278.9 2694.5,1278.9 2707.8,1278.9 2721.0,1278.9 2734.2,1278.9 2747.5,1278.9 2760.8,1278.9 2774.0,1278.9 2787.2,1278.9 2800.5,1278.9 2813.8,1278.9 2827.0,1278.9 2840.2,1278.9 2853.5,1278.9 2866.8,1278.9 2880.0,1278.9 2893.2,1278.9 2906.5,1278.9 2919.8,1278.9 2933.0,1278.8 2946.2,1278.8 2959.5,1278.8 2972.8,1278.8 2986.0,1278.8 2999.2,1278.8 3012.5,1278.8 3025.8,1278.8 3039.0,1278.8 3052.2,1278.8 3065.5,1278.8 3078.8,1278.8 3092.0,1278.8 3105.2,1278.8 3118.5,1278.8 3131.8,1278.8 3145.0,1278.8 3158.2,1278.8 3171.5,1278.8 3184.8,1278.8 3198.0,1278.8 3211.2,1278.6 3224.5,1278.6 3237.8,1278.6 3251.0,1278.6 3264.2,1278.6 3277.5,1278.6 3290.8,1278.6 3304.0,1278.6 3317.2,1278.5 3330.5,1278.5 3342.0,1278.5" fill="none" stroke="#6D1F62" stroke-width="1.5" stroke-linejoin="round"/><polyline points="839.5,1280.0 852.8,1280.0 866.0,1280.0 879.2,1280.0 892.5,1280.0 905.8,1280.0 919.0,1280.0 932.2,1280.0 945.5,1280.0 958.8,1280.0 972.0,1280.0 985.2,1280.0 998.5,1280.0 1011.8,1280.0 1025.0,1280.0 1038.2,1280.0 1051.5,1280.0 1064.8,1280.0 1078.0,1280.0 1091.2,1280.0 1104.5,1280.0 1117.8,1280.0 1131.0,1280.0 1144.2,1280.0 1157.5,1280.0 1170.8,1280.0 1184.0,1280.0 1197.2,1280.0 1210.5,1280.0 1223.8,1280.0 1237.0,1280.0 1250.2,1280.0 1263.5,1280.0 1276.8,1280.0 1290.0,1280.0 1303.2,1280.0 1316.5,1280.0 1329.8,1280.0 1343.0,1280.0 1356.2,1280.0 1369.5,1280.0 1382.8,1280.0 1396.0,1280.0 1409.2,1280.0 1422.5,1280.0 1435.8,1280.0 1449.0,1280.0 1462.2,1280.0 1475.5,1280.0 1488.8,1280.0 1502.0,1280.0 1515.2,1280.0 1528.5,1280.0 1541.8,1280.0 1555.0,1280.0 1568.2,1280.0 1581.5,1280.0 1594.8,1280.0 1608.0,1280.0 1621.2,1280.0 1634.5,1280.0 1647.8,1280.0 1661.0,1280.0 1674.2,1280.0 1687.5,1280.0 1700.8,1280.0 1714.0,1280.0 1727.2,1280.0 1740.5,1280.0 1753.8,1280.0 1767.0,1280.0 1780.2,1280.0 1793.5,1280.0 1806.8,1280.0 1820.0,1280.0 1833.2,1280.0 1846.5,1280.0 1859.8,1280.0 1873.0,1280.0 1886.2,1280.0 1899.5,1280.0 1912.8,1280.0 1926.0,1280.0 1939.2,1280.0 1952.5,1280.0 1965.8,1280.0 1979.0,1280.0 1992.2,1280.0 2005.5,1280.0 2018.8,1280.0 2032.0,1280.0 2045.2,1280.0 2058.5,1280.0 2071.8,1280.0 2085.0,1280.0 2098.2,1280.0 2111.5,1280.0 2124.8,1280.0 2138.0,1280.0 2151.2,1280.0 2164.5,1280.0 2177.8,1280.0 2191.0,1280.0 2204.2,1280.0 2217.5,1280.0 2230.8,1280.0 2244.0,1280.0 2257.2,1280.0 2270.5,1280.0 2283.8,1280.0 2297.0,1280.0 2310.2,1280.0 2323.5,1280.0 2336.8,1280.0 2350.0,1280.0 2363.2,1280.0 2376.5,1280.0 2389.8,1280.0 2403.0,1280.0 2416.2,1280.0 2429.5,1280.0 2442.8,1280.0 2456.0,1280.0 2469.2,1280.0 2482.5,1280.0 2495.8,1280.0 2509.0,1280.0 2522.2,1280.0 2535.5,1280.0 2548.8,1280.0 2562.0,1280.0 2575.2,1280.0 2588.5,1280.0 2601.8,1280.0 2615.0,1280.0 2628.2,1280.0 2641.5,1280.0 2654.8,1280.0 2668.0,1280.0 2681.2,1280.0 2694.5,1280.0 2707.8,1280.0 2721.0,1280.0 2734.2,1280.0 2747.5,1280.0 2760.8,1279.7 2774.0,1279.7 2787.2,1279.7 2800.5,1279.3 2813.8,1279.3 2827.0,1279.3 2840.2,1279.3 2853.5,1279.3 2866.8,1279.3 2880.0,1279.3 2893.2,1279.0 2906.5,1279.0 2919.8,1279.0 2933.0,1279.0 2946.2,1279.0 2959.5,1279.0 2972.8,1278.6 2986.0,1278.6 2999.2,1278.6 3012.5,1278.6 3025.8,1278.6 3039.0,1278.6 3052.2,1278.6 3065.5,1278.6 3078.8,1278.3 3092.0,1278.3 3105.2,1277.9 3118.5,1277.6 3131.8,1277.6 3145.0,1277.6 3158.2,1277.6 3171.5,1277.6 3184.8,1277.6 3198.0,1277.6 3211.2,1277.6 3224.5,1277.6 3237.8,1277.2 3251.0,1277.2 3264.2,1277.2 3277.5,1277.2 3290.8,1277.2 3304.0,1277.2 3317.2,1277.2 3330.5,1277.2 3342.0,1277.2" fill="none" stroke="#F9BA8F" stroke-width="1.5" stroke-linejoin="round"/><polyline points="839.5,1280.0 852.8,1280.0 866.0,1280.0 879.2,1280.0 892.5,1280.0 905.8,1280.0 919.0,1280.0 932.2,1280.0 945.5,1280.0 958.8,1280.0 972.0,1280.0 985.2,1280.0 998.5,1280.0 1011.8,1280.0 1025.0,1280.0 1038.2,1280.0 1051.5,1280.0 1064.8,1280.0 1078.0,1280.0 1091.2,1280.0 1104.5,1280.0 1117.8,1280.0 1131.0,1280.0 1144.2,1280.0 1157.5,1280.0 1170.8,1280.0 1184.0,1280.0 1197.2,1280.0 1210.5,1280.0 1223.8,1280.0 1237.0,1280.0 1250.2,1280.0 1263.5,1280.0 1276.8,1280.0 1290.0,1280.0 1303.2,1280.0 1316.5,1280.0 1329.8,1280.0 1343.0,1280.0 1356.2,1280.0 1369.5,1280.0 1382.8,1280.0 1396.0,1280.0 1409.2,1280.0 1422.5,1280.0 1435.8,1280.0 1449.0,1280.0 1462.2,1280.0 1475.5,1280.0 1488.8,1280.0 1502.0,1280.0 1515.2,1280.0 1528.5,1280.0 1541.8,1280.0 1555.0,1280.0 1568.2,1280.0 1581.5,1280.0 1594.8,1280.0 1608.0,1280.0 1621.2,1280.0 1634.5,1280.0 1647.8,1280.0 1661.0,1280.0 1674.2,1280.0 1687.5,1280.0 1700.8,1280.0 1714.0,1280.0 1727.2,1280.0 1740.5,1280.0 1753.8,1280.0 1767.0,1280.0 1780.2,1280.0 1793.5,1280.0 1806.8,1280.0 1820.0,1280.0 1833.2,1280.0 1846.5,1280.0 1859.8,1280.0 1873.0,1280.0 1886.2,1280.0 1899.5,1280.0 1912.8,1280.0 1926.0,1280.0 1939.2,1280.0 1952.5,1280.0 1965.8,1280.0 1979.0,1280.0 1992.2,1280.0 2005.5,1280.0 2018.8,1280.0 2032.0,1280.0 2045.2,1280.0 2058.5,1280.0 2071.8,1280.0 2085.0,1280.0 2098.2,1280.0 2111.5,1280.0 2124.8,1280.0 2138.0,1280.0 2151.2,1280.0 2164.5,1280.0 2177.8,1280.0 2191.0,1280.0 2204.2,1280.0 2217.5,1280.0 2230.8,1280.0 2244.0,1280.0 2257.2,1280.0 2270.5,1280.0 2283.8,1280.0 2297.0,1280.0 2310.2,1280.0 2323.5,1280.0 2336.8,1280.0 2350.0,1280.0 2363.2,1280.0 2376.5,1280.0 2389.8,1280.0 2403.0,1280.0 2416.2,1280.0 2429.5,1280.0 2442.8,1280.0 2456.0,1280.0 2469.2,1280.0 2482.5,1280.0 2495.8,1280.0 2509.0,1280.0 2522.2,1280.0 2535.5,1280.0 2548.8,1280.0 2562.0,1280.0 2575.2,1280.0 2588.5,1280.0 2601.8,1280.0 2615.0,1280.0 2628.2,1280.0 2641.5,1280.0 2654.8,1280.0 2668.0,1280.0 2681.2,1280.0 2694.5,1280.0 2707.8,1280.0 2721.0,1280.0 2734.2,1280.0 2747.5,1280.0 2760.8,1280.0 2774.0,1280.0 2787.2,1280.0 2800.5,1280.0 2813.8,1280.0 2827.0,1279.6 2840.2,1279.6 2853.5,1279.2 2866.8,1279.2 2880.0,1278.8 2893.2,1278.8 2906.5,1278.8 2919.8,1278.0 2933.0,1278.0 2946.2,1278.0 2959.5,1278.0 2972.8,1278.0 2986.0,1278.0 2999.2,1278.0 3012.5,1277.2 3025.8,1277.2 3039.0,1277.2 3052.2,1277.2 3065.5,1277.2 3078.8,1277.2 3092.0,1277.2 3105.2,1277.2 3118.5,1277.2 3131.8,1277.2 3145.0,1277.2 3158.2,1277.2 3171.5,1277.2 3184.8,1277.2 3198.0,1277.2 3211.2,1276.8 3224.5,1276.3 3237.8,1276.3 3251.0,1276.3 3264.2,1276.3 3277.5,1276.3 3290.8,1275.9 3304.0,1275.9 3317.2,1275.9 3330.5,1275.9 3342.0,1275.9" fill="none" stroke="#F4D598" stroke-width="1.5" stroke-linejoin="round"/><polyline points="839.5,1280.0 852.8,1280.0 866.0,1280.0 879.2,1280.0 892.5,1280.0 905.8,1280.0 919.0,1280.0 932.2,1280.0 945.5,1280.0 958.8,1280.0 972.0,1280.0 985.2,1280.0 998.5,1280.0 1011.8,1280.0 1025.0,1280.0 1038.2,1280.0 1051.5,1280.0 1064.8,1280.0 1078.0,1280.0 1091.2,1280.0 1104.5,1280.0 1117.8,1280.0 1131.0,1280.0 1144.2,1280.0 1157.5,1280.0 1170.8,1280.0 1184.0,1280.0 1197.2,1280.0 1210.5,1280.0 1223.8,1280.0 1237.0,1280.0 1250.2,1280.0 1263.5,1280.0 1276.8,1280.0 1290.0,1280.0 1303.2,1280.0 1316.5,1280.0 1329.8,1280.0 1343.0,1280.0 1356.2,1280.0 1369.5,1280.0 1382.8,1280.0 1396.0,1280.0 1409.2,1280.0 1422.5,1280.0 1435.8,1280.0 1449.0,1280.0 1462.2,1280.0 1475.5,1280.0 1488.8,1280.0 1502.0,1280.0 1515.2,1279.6 1528.5,1279.6 1541.8,1279.6 1555.0,1279.6 1568.2,1279.6 1581.5,1279.6 1594.8,1279.6 1608.0,1279.6 1621.2,1279.6 1634.5,1279.6 1647.8,1279.6 1661.0,1279.6 1674.2,1279.2 1687.5,1279.2 1700.8,1279.2 1714.0,1279.2 1727.2,1279.2 1740.5,1279.2 1753.8,1279.2 1767.0,1279.2 1780.2,1279.2 1793.5,1279.2 1806.8,1279.2 1820.0,1279.2 1833.2,1279.2 1846.5,1279.2 1859.8,1279.2 1873.0,1279.2 1886.2,1279.2 1899.5,1279.2 1912.8,1279.2 1926.0,1279.2 1939.2,1279.2 1952.5,1279.2 1965.8,1279.2 1979.0,1279.2 1992.2,1279.2 2005.5,1279.2 2018.8,1279.2 2032.0,1279.2 2045.2,1279.2 2058.5,1279.2 2071.8,1279.2 2085.0,1279.2 2098.2,1279.2 2111.5,1279.2 2124.8,1279.2 2138.0,1279.2 2151.2,1279.2 2164.5,1279.2 2177.8,1279.2 2191.0,1279.2 2204.2,1279.2 2217.5,1279.2 2230.8,1279.2 2244.0,1279.2 2257.2,1279.2 2270.5,1279.2 2283.8,1279.2 2297.0,1279.2 2310.2,1279.2 2323.5,1279.2 2336.8,1278.8 2350.0,1278.8 2363.2,1278.8 2376.5,1278.8 2389.8,1278.8 2403.0,1278.8 2416.2,1278.8 2429.5,1278.8 2442.8,1278.8 2456.0,1278.8 2469.2,1278.8 2482.5,1278.8 2495.8,1278.8 2509.0,1278.8 2522.2,1278.8 2535.5,1278.8 2548.8,1278.8 2562.0,1278.8 2575.2,1278.8 2588.5,1278.8 2601.8,1278.8 2615.0,1278.8 2628.2,1278.4 2641.5,1278.4 2654.8,1278.4 2668.0,1278.4 2681.2,1278.0 2694.5,1278.0 2707.8,1278.0 2721.0,1278.0 2734.2,1278.0 2747.5,1278.0 2760.8,1278.0 2774.0,1278.0 2787.2,1278.0 2800.5,1278.0 2813.8,1278.0 2827.0,1278.0 2840.2,1278.0 2853.5,1277.2 2866.8,1277.2 2880.0,1277.2 2893.2,1277.2 2906.5,1277.2 2919.8,1277.2 2933.0,1277.2 2946.2,1276.8 2959.5,1276.8 2972.8,1276.8 2986.0,1276.8 2999.2,1276.8 3012.5,1276.8 3025.8,1276.8 3039.0,1276.8 3052.2,1276.8 3065.5,1276.8 3078.8,1276.8 3092.0,1276.8 3105.2,1276.8 3118.5,1276.8 3131.8,1276.8 3145.0,1276.4 3158.2,1276.4 3171.5,1276.4 3184.8,1276.0 3198.0,1276.0 3211.2,1276.0 3224.5,1275.2 3237.8,1275.2 3251.0,1275.2 3264.2,1275.2 3277.5,1275.2 3290.8,1275.2 3304.0,1275.2 3317.2,1275.2 3330.5,1275.2 3342.0,1275.2" fill="none" stroke="#447EBC" stroke-width="1.5" stroke-linejoin="round"/><polyline points="839.5,1280.0 852.8,1280.0 866.0,1280.0 879.2,1279.9 892.5,1279.9 905.8,1279.9 919.0,1279.9 932.2,1279.9 945.5,1279.9 958.8,1279.9 972.0,1279.9 985.2,1279.9 998.5,1279.9 1011.8,1279.9 1025.0,1279.9 1038.2,1279.9 1051.5,1279.9 1064.8,1279.9 1078.0,1279.9 1091.2,1279.9 1104.5,1279.7 1117.8,1279.7 1131.0,1279.7 1144.2,1279.7 1157.5,1279.7 1170.8,1279.7 1184.0,1279.7 1197.2,1279.7 1210.5,1279.7 1223.8,1279.7 1237.0,1279.7 1250.2,1279.7 1263.5,1279.7 1276.8,1279.7 1290.0,1279.7 1303.2,1279.7 1316.5,1279.7 1329.8,1279.7 1343.0,1279.5 1356.2,1279.4 1369.5,1279.3 1382.8,1279.3 1396.0,1279.3 1409.2,1279.3 1422.5,1279.3 1435.8,1279.3 1449.0,1279.3 1462.2,1279.3 1475.5,1279.3 1488.8,1279.3 1502.0,1279.3 1515.2,1279.2 1528.5,1279.1 1541.8,1279.0 1555.0,1279.0 1568.2,1279.0 1581.5,1279.0 1594.8,1278.8 1608.0,1278.8 1621.2,1278.8 1634.5,1278.8 1647.8,1278.8 1661.0,1278.8 1674.2,1278.8 1687.5,1278.8 1700.8,1278.7 1714.0,1278.7 1727.2,1278.7 1740.5,1278.7 1753.8,1278.7 1767.0,1278.6 1780.2,1278.6 1793.5,1278.5 1806.8,1278.5 1820.0,1278.5 1833.2,1278.5 1846.5,1278.5 1859.8,1278.5 1873.0,1278.5 1886.2,1278.4 1899.5,1278.4 1912.8,1278.4 1926.0,1278.4 1939.2,1278.4 1952.5,1278.4 1965.8,1278.3 1979.0,1278.3 1992.2,1278.3 2005.5,1278.3 2018.8,1278.3 2032.0,1278.2 2045.2,1278.2 2058.5,1278.2 2071.8,1278.0 2085.0,1278.0 2098.2,1278.0 2111.5,1278.0 2124.8,1278.0 2138.0,1277.9 2151.2,1277.9 2164.5,1277.9 2177.8,1277.9 2191.0,1277.9 2204.2,1277.8 2217.5,1277.8 2230.8,1277.7 2244.0,1277.7 2257.2,1277.7 2270.5,1277.7 2283.8,1277.7 2297.0,1277.7 2310.2,1277.7 2323.5,1277.6 2336.8,1277.6 2350.0,1277.6 2363.2,1277.6 2376.5,1277.6 2389.8,1277.6 2403.0,1277.6 2416.2,1277.6 2429.5,1277.6 2442.8,1277.5 2456.0,1277.5 2469.2,1277.5 2482.5,1277.3 2495.8,1277.3 2509.0,1277.2 2522.2,1277.2 2535.5,1277.2 2548.8,1277.1 2562.0,1277.0 2575.2,1277.0 2588.5,1277.0 2601.8,1277.0 2615.0,1277.0 2628.2,1277.0 2641.5,1277.0 2654.8,1277.0 2668.0,1276.9 2681.2,1276.9 2694.5,1276.9 2707.8,1276.9 2721.0,1276.9 2734.2,1276.9 2747.5,1276.8 2760.8,1276.8 2774.0,1276.7 2787.2,1276.7 2800.5,1276.7 2813.8,1276.7 2827.0,1276.5 2840.2,1276.4 2853.5,1276.0 2866.8,1276.0 2880.0,1276.0 2893.2,1275.8 2906.5,1275.8 2919.8,1275.8 2933.0,1275.8 2946.2,1275.8 2959.5,1275.7 2972.8,1275.7 2986.0,1275.7 2999.2,1275.7 3012.5,1275.7 3025.8,1275.7 3039.0,1275.7 3052.2,1275.7 3065.5,1275.7 3078.8,1275.7 3092.0,1275.7 3105.2,1275.7 3118.5,1275.6 3131.8,1275.6 3145.0,1275.6 3158.2,1275.6 3171.5,1275.5 3184.8,1275.5 3198.0,1275.5 3211.2,1275.4 3224.5,1275.4 3237.8,1275.4 3251.0,1275.4 3264.2,1275.4 3277.5,1275.4 3290.8,1275.4 3304.0,1275.4 3317.2,1275.4 3330.5,1275.4 3342.0,1275.4" fill="none" stroke="#8AB8FF" stroke-width="1.5" stroke-linejoin="round"/><polyline points="839.5,1280.0 852.8,1280.0 866.0,1280.0 879.2,1280.0 892.5,1280.0 905.8,1280.0 919.0,1280.0 932.2,1280.0 945.5,1280.0 958.8,1280.0 972.0,1280.0 985.2,1280.0 998.5,1280.0 1011.8,1280.0 1025.0,1280.0 1038.2,1280.0 1051.5,1280.0 1064.8,1280.0 1078.0,1280.0 1091.2,1280.0 1104.5,1280.0 1117.8,1280.0 1131.0,1280.0 1144.2,1280.0 1157.5,1280.0 1170.8,1280.0 1184.0,1280.0 1197.2,1280.0 1210.5,1280.0 1223.8,1280.0 1237.0,1280.0 1250.2,1280.0 1263.5,1280.0 1276.8,1280.0 1290.0,1279.3 1303.2,1279.3 1316.5,1279.3 1329.8,1278.6 1343.0,1278.6 1356.2,1277.3 1369.5,1277.3 1382.8,1277.3 1396.0,1276.6 1409.2,1276.6 1422.5,1276.6 1435.8,1276.6 1449.0,1276.6 1462.2,1276.6 1475.5,1275.9 1488.8,1275.9 1502.0,1275.9 1515.2,1275.9 1528.5,1275.2 1541.8,1275.2 1555.0,1275.2 1568.2,1275.2 1581.5,1275.2 1594.8,1275.2 1608.0,1275.2 1621.2,1275.2 1634.5,1275.2 1647.8,1275.2 1661.0,1275.2 1674.2,1275.2 1687.5,1274.5 1700.8,1274.5 1714.0,1274.5 1727.2,1274.5 1740.5,1274.5 1753.8,1274.5 1767.0,1274.5 1780.2,1274.5 1793.5,1274.5 1806.8,1274.5 1820.0,1274.5 1833.2,1274.5 1846.5,1274.5 1859.8,1274.5 1873.0,1274.5 1886.2,1274.5 1899.5,1273.8 1912.8,1273.8 1926.0,1273.8 1939.2,1273.8 1952.5,1273.8 1965.8,1273.8 1979.0,1273.2 1992.2,1273.2 2005.5,1273.2 2018.8,1273.2 2032.0,1273.2 2045.2,1273.2 2058.5,1273.2 2071.8,1273.2 2085.0,1273.2 2098.2,1273.2 2111.5,1272.5 2124.8,1271.8 2138.0,1271.8 2151.2,1271.8 2164.5,1271.8 2177.8,1271.8 2191.0,1271.8 2204.2,1271.8 2217.5,1271.8 2230.8,1271.8 2244.0,1271.8 2257.2,1271.8 2270.5,1271.8 2283.8,1271.1 2297.0,1271.1 2310.2,1271.1 2323.5,1271.1 2336.8,1271.1 2350.0,1270.4 2363.2,1270.4 2376.5,1270.4 2389.8,1270.4 2403.0,1270.4 2416.2,1270.4 2429.5,1270.4 2442.8,1270.4 2456.0,1270.4 2469.2,1270.4 2482.5,1270.4 2495.8,1270.4 2509.0,1270.4 2522.2,1270.4 2535.5,1270.4 2548.8,1270.4 2562.0,1270.4 2575.2,1270.4 2588.5,1269.7 2601.8,1269.7 2615.0,1269.7 2628.2,1269.7 2641.5,1269.7 2654.8,1269.7 2668.0,1269.7 2681.2,1269.7 2694.5,1269.7 2707.8,1269.7 2721.0,1269.7 2734.2,1269.7 2747.5,1269.7 2760.8,1269.7 2774.0,1269.7 2787.2,1269.7 2800.5,1269.7 2813.8,1269.7 2827.0,1269.7 2840.2,1269.7 2853.5,1269.7 2866.8,1269.7 2880.0,1269.7 2893.2,1269.7 2906.5,1269.7 2919.8,1269.7 2933.0,1269.7 2946.2,1269.7 2959.5,1269.7 2972.8,1269.0 2986.0,1269.0 2999.2,1269.0 3012.5,1269.0 3025.8,1269.0 3039.0,1269.0 3052.2,1269.0 3065.5,1269.0 3078.8,1269.0 3092.0,1269.0 3105.2,1269.0 3118.5,1269.0 3131.8,1269.0 3145.0,1269.0 3158.2,1269.0 3171.5,1269.0 3184.8,1269.0 3198.0,1269.0 3211.2,1269.0 3224.5,1269.0 3237.8,1269.0 3251.0,1269.0 3264.2,1269.0 3277.5,1269.0 3290.8,1269.0 3304.0,1269.0 3317.2,1269.0 3330.5,1269.0 3342.0,1269.0" fill="none" stroke="#F2CC0C" stroke-width="1.5" stroke-linejoin="round"/><polyline points="839.5,1280.0 852.8,1280.0 866.0,1280.0 879.2,1280.0 892.5,1280.0 905.8,1280.0 919.0,1280.0 932.2,1280.0 945.5,1280.0 958.8,1280.0 972.0,1280.0 985.2,1280.0 998.5,1280.0 1011.8,1280.0 1025.0,1280.0 1038.2,1280.0 1051.5,1280.0 1064.8,1280.0 1078.0,1280.0 1091.2,1280.0 1104.5,1280.0 1117.8,1280.0 1131.0,1280.0 1144.2,1280.0 1157.5,1280.0 1170.8,1280.0 1184.0,1280.0 1197.2,1280.0 1210.5,1280.0 1223.8,1280.0 1237.0,1280.0 1250.2,1280.0 1263.5,1280.0 1276.8,1280.0 1290.0,1279.3 1303.2,1279.3 1316.5,1279.3 1329.8,1278.6 1343.0,1278.6 1356.2,1277.3 1369.5,1277.3 1382.8,1277.3 1396.0,1276.6 1409.2,1276.6 1422.5,1276.6 1435.8,1276.6 1449.0,1276.6 1462.2,1276.6 1475.5,1275.9 1488.8,1275.9 1502.0,1275.9 1515.2,1275.9 1528.5,1275.2 1541.8,1275.2 1555.0,1275.2 1568.2,1275.2 1581.5,1275.2 1594.8,1275.2 1608.0,1275.2 1621.2,1275.2 1634.5,1275.2 1647.8,1275.2 1661.0,1275.2 1674.2,1275.2 1687.5,1274.5 1700.8,1274.5 1714.0,1274.5 1727.2,1274.5 1740.5,1274.5 1753.8,1274.5 1767.0,1274.5 1780.2,1274.5 1793.5,1274.5 1806.8,1274.5 1820.0,1274.5 1833.2,1274.5 1846.5,1274.5 1859.8,1274.5 1873.0,1274.5 1886.2,1274.5 1899.5,1273.8 1912.8,1273.8 1926.0,1273.8 1939.2,1273.8 1952.5,1273.8 1965.8,1273.8 1979.0,1273.2 1992.2,1273.2 2005.5,1273.2 2018.8,1273.2 2032.0,1273.2 2045.2,1273.2 2058.5,1273.2 2071.8,1273.2 2085.0,1273.2 2098.2,1273.2 2111.5,1272.5 2124.8,1271.8 2138.0,1271.8 2151.2,1271.8 2164.5,1271.8 2177.8,1271.8 2191.0,1271.8 2204.2,1271.8 2217.5,1271.8 2230.8,1271.8 2244.0,1271.8 2257.2,1271.8 2270.5,1271.8 2283.8,1271.1 2297.0,1271.1 2310.2,1271.1 2323.5,1271.1 2336.8,1271.1 2350.0,1270.4 2363.2,1270.4 2376.5,1270.4 2389.8,1270.4 2403.0,1270.4 2416.2,1270.4 2429.5,1270.4 2442.8,1270.4 2456.0,1270.4 2469.2,1270.4 2482.5,1270.4 2495.8,1270.4 2509.0,1270.4 2522.2,1270.4 2535.5,1270.4 2548.8,1270.4 2562.0,1270.4 2575.2,1270.4 2588.5,1269.7 2601.8,1269.7 2615.0,1269.7 2628.2,1269.7 2641.5,1269.7 2654.8,1269.7 2668.0,1269.7 2681.2,1269.7 2694.5,1269.7 2707.8,1269.7 2721.0,1269.7 2734.2,1269.7 2747.5,1269.7 2760.8,1269.7 2774.0,1269.7 2787.2,1269.7 2800.5,1269.7 2813.8,1269.7 2827.0,1269.7 2840.2,1269.7 2853.5,1269.7 2866.8,1269.7 2880.0,1269.7 2893.2,1269.7 2906.5,1269.7 2919.8,1269.7 2933.0,1269.7 2946.2,1269.7 2959.5,1269.7 2972.8,1269.0 2986.0,1269.0 2999.2,1269.0 3012.5,1269.0 3025.8,1269.0 3039.0,1269.0 3052.2,1269.0 3065.5,1269.0 3078.8,1269.0 3092.0,1269.0 3105.2,1269.0 3118.5,1269.0 3131.8,1269.0 3145.0,1269.0 3158.2,1269.0 3171.5,1269.0 3184.8,1269.0 3198.0,1269.0 3211.2,1269.0 3224.5,1269.0 3237.8,1269.0 3251.0,1269.0 3264.2,1269.0 3277.5,1269.0 3290.8,1269.0 3304.0,1269.0 3317.2,1269.0 3330.5,1269.0 3342.0,1269.0" fill="none" stroke="#70DBED" stroke-width="1.5" stroke-linejoin="round"/><polyline points="839.5,1280.0 852.8,1280.0 866.0,1280.0 879.2,1279.9 892.5,1279.8 905.8,1279.6 919.0,1279.7 932.2,1279.6 945.5,1279.5 958.8,1279.5 972.0,1279.3 985.2,1279.2 998.5,1279.0 1011.8,1279.2 1025.0,1279.0 1038.2,1279.0 1051.5,1278.7 1064.8,1278.6 1078.0,1278.8 1091.2,1278.3 1104.5,1278.3 1117.8,1278.3 1131.0,1278.2 1144.2,1278.3 1157.5,1278.3 1170.8,1278.0 1184.0,1278.1 1197.2,1277.9 1210.5,1277.8 1223.8,1277.8 1237.0,1277.6 1250.2,1277.5 1263.5,1277.3 1276.8,1277.3 1290.0,1277.2 1303.2,1277.2 1316.5,1277.0 1329.8,1277.0 1343.0,1277.0 1356.2,1276.6 1369.5,1276.5 1382.8,1276.5 1396.0,1276.5 1409.2,1276.5 1422.5,1276.5 1435.8,1276.4 1449.0,1276.4 1462.2,1276.0 1475.5,1276.1 1488.8,1275.8 1502.0,1275.9 1515.2,1275.6 1528.5,1275.6 1541.8,1275.8 1555.0,1275.6 1568.2,1275.3 1581.5,1275.4 1594.8,1275.1 1608.0,1275.2 1621.2,1275.3 1634.5,1275.0 1647.8,1274.9 1661.0,1275.0 1674.2,1274.9 1687.5,1274.8 1700.8,1274.4 1714.0,1274.4 1727.2,1274.6 1740.5,1274.5 1753.8,1274.4 1767.0,1274.4 1780.2,1274.0 1793.5,1274.1 1806.8,1273.9 1820.0,1273.9 1833.2,1273.9 1846.5,1273.6 1859.8,1273.7 1873.0,1273.5 1886.2,1273.6 1899.5,1273.4 1912.8,1273.4 1926.0,1273.3 1939.2,1272.9 1952.5,1272.9 1965.8,1273.0 1979.0,1272.7 1992.2,1272.9 2005.5,1272.7 2018.8,1272.5 2032.0,1272.5 2045.2,1272.6 2058.5,1272.2 2071.8,1272.4 2085.0,1272.3 2098.2,1272.0 2111.5,1272.1 2124.8,1272.0 2138.0,1272.0 2151.2,1271.9 2164.5,1271.6 2177.8,1271.7 2191.0,1271.4 2204.2,1271.4 2217.5,1271.3 2230.8,1271.1 2244.0,1271.1 2257.2,1271.0 2270.5,1270.8 2283.8,1271.0 2297.0,1270.9 2310.2,1270.5 2323.5,1270.5 2336.8,1270.6 2350.0,1270.5 2363.2,1270.3 2376.5,1270.1 2389.8,1270.3 2403.0,1269.9 2416.2,1269.9 2429.5,1269.9 2442.8,1269.9 2456.0,1269.9 2469.2,1269.8 2482.5,1269.4 2495.8,1269.6 2509.0,1269.3 2522.2,1269.4 2535.5,1269.1 2548.8,1269.1 2562.0,1269.1 2575.2,1269.1 2588.5,1268.8 2601.8,1268.9 2615.0,1268.8 2628.2,1268.6 2641.5,1268.4 2654.8,1268.4 2668.0,1268.4 2681.2,1268.1 2694.5,1268.3 2707.8,1268.3 2721.0,1268.3 2734.2,1268.3 2747.5,1268.2 2760.8,1268.0 2774.0,1267.9 2787.2,1267.9 2800.5,1267.8 2813.8,1267.6 2827.0,1267.5 2840.2,1267.6 2853.5,1267.4 2866.8,1267.1 2880.0,1267.0 2893.2,1267.0 2906.5,1266.9 2919.8,1266.9 2933.0,1267.0 2946.2,1266.9 2959.5,1266.8 2972.8,1266.4 2986.0,1266.4 2999.2,1266.3 3012.5,1266.5 3025.8,1266.2 3039.0,1266.2 3052.2,1266.0 3065.5,1266.1 3078.8,1265.7 3092.0,1265.9 3105.2,1265.7 3118.5,1265.6 3131.8,1265.4 3145.0,1265.4 3158.2,1265.3 3171.5,1265.2 3184.8,1265.1 3198.0,1265.2 3211.2,1265.0 3224.5,1264.8 3237.8,1264.8 3251.0,1264.9 3264.2,1264.6 3277.5,1264.5 3290.8,1264.6 3304.0,1264.4 3317.2,1264.5 3330.5,1264.3 3342.0,1264.3" fill="none" stroke="#FF780A" stroke-width="1.5" stroke-linejoin="round"/><polyline points="839.5,1280.0 852.8,1280.0 866.0,1280.0 879.2,1279.9 892.5,1279.8 905.8,1279.6 919.0,1279.7 932.2,1279.6 945.5,1279.5 958.8,1279.5 972.0,1279.3 985.2,1279.2 998.5,1279.0 1011.8,1279.2 1025.0,1279.0 1038.2,1279.0 1051.5,1278.7 1064.8,1278.6 1078.0,1278.8 1091.2,1278.3 1104.5,1278.3 1117.8,1278.3 1131.0,1278.2 1144.2,1278.3 1157.5,1278.3 1170.8,1278.0 1184.0,1278.1 1197.2,1277.9 1210.5,1277.8 1223.8,1277.8 1237.0,1277.6 1250.2,1277.5 1263.5,1277.3 1276.8,1277.3 1290.0,1277.2 1303.2,1277.2 1316.5,1277.0 1329.8,1277.0 1343.0,1277.0 1356.2,1276.6 1369.5,1276.5 1382.8,1276.5 1396.0,1276.5 1409.2,1276.5 1422.5,1276.5 1435.8,1276.4 1449.0,1276.4 1462.2,1276.0 1475.5,1276.1 1488.8,1275.8 1502.0,1275.9 1515.2,1275.6 1528.5,1275.6 1541.8,1275.8 1555.0,1275.6 1568.2,1275.3 1581.5,1275.4 1594.8,1275.1 1608.0,1275.2 1621.2,1275.3 1634.5,1275.0 1647.8,1274.9 1661.0,1275.0 1674.2,1274.9 1687.5,1274.8 1700.8,1274.4 1714.0,1274.4 1727.2,1274.6 1740.5,1274.5 1753.8,1274.4 1767.0,1274.4 1780.2,1274.0 1793.5,1274.1 1806.8,1273.9 1820.0,1273.9 1833.2,1273.9 1846.5,1273.6 1859.8,1273.7 1873.0,1273.5 1886.2,1273.6 1899.5,1273.4 1912.8,1273.4 1926.0,1273.3 1939.2,1272.9 1952.5,1272.9 1965.8,1273.0 1979.0,1272.7 1992.2,1272.9 2005.5,1272.7 2018.8,1272.5 2032.0,1272.5 2045.2,1272.6 2058.5,1272.2 2071.8,1272.4 2085.0,1272.3 2098.2,1272.0 2111.5,1272.1 2124.8,1272.0 2138.0,1272.0 2151.2,1271.9 2164.5,1271.6 2177.8,1271.7 2191.0,1271.4 2204.2,1271.4 2217.5,1271.3 2230.8,1271.1 2244.0,1271.1 2257.2,1271.0 2270.5,1270.8 2283.8,1271.0 2297.0,1270.9 2310.2,1270.5 2323.5,1270.5 2336.8,1270.6 2350.0,1270.5 2363.2,1270.3 2376.5,1270.1 2389.8,1270.3 2403.0,1269.9 2416.2,1269.9 2429.5,1269.9 2442.8,1269.9 2456.0,1269.9 2469.2,1269.8 2482.5,1269.4 2495.8,1269.6 2509.0,1269.3 2522.2,1269.4 2535.5,1269.1 2548.8,1269.1 2562.0,1269.1 2575.2,1269.1 2588.5,1268.8 2601.8,1268.9 2615.0,1268.8 2628.2,1268.6 2641.5,1268.4 2654.8,1268.4 2668.0,1268.4 2681.2,1268.1 2694.5,1268.3 2707.8,1268.3 2721.0,1268.3 2734.2,1268.3 2747.5,1268.2 2760.8,1268.0 2774.0,1267.9 2787.2,1267.9 2800.5,1267.8 2813.8,1267.6 2827.0,1267.5 2840.2,1267.6 2853.5,1267.4 2866.8,1267.1 2880.0,1267.0 2893.2,1267.0 2906.5,1266.9 2919.8,1266.9 2933.0,1267.0 2946.2,1266.9 2959.5,1266.8 2972.8,1266.4 2986.0,1266.4 2999.2,1266.3 3012.5,1266.5 3025.8,1266.2 3039.0,1266.2 3052.2,1266.0 3065.5,1266.1 3078.8,1265.7 3092.0,1265.9 3105.2,1265.7 3118.5,1265.6 3131.8,1265.4 3145.0,1265.4 3158.2,1265.3 3171.5,1265.2 3184.8,1265.1 3198.0,1265.2 3211.2,1265.0 3224.5,1264.8 3237.8,1264.8 3251.0,1264.9 3264.2,1264.6 3277.5,1264.5 3290.8,1264.6 3304.0,1264.4 3317.2,1264.5 3330.5,1264.3 3342.0,1264.3" fill="none" stroke="#F2495C" stroke-width="1.5" stroke-linejoin="round"/><polyline points="839.5,1280.0 852.8,1280.0 866.0,1280.0 879.2,1279.9 892.5,1279.6 905.8,1279.4 919.0,1279.5 932.2,1279.4 945.5,1279.1 958.8,1279.0 972.0,1278.5 985.2,1278.4 998.5,1278.3 1011.8,1278.2 1025.0,1277.9 1038.2,1278.0 1051.5,1277.7 1064.8,1277.7 1078.0,1277.2 1091.2,1277.4 1104.5,1276.9 1117.8,1277.1 1131.0,1276.6 1144.2,1276.6 1157.5,1276.4 1170.8,1276.0 1184.0,1276.2 1197.2,1276.1 1210.5,1275.5 1223.8,1275.6 1237.0,1275.6 1250.2,1275.0 1263.5,1274.9 1276.8,1275.1 1290.0,1274.8 1303.2,1274.8 1316.5,1274.5 1329.8,1274.2 1343.0,1274.3 1356.2,1273.8 1369.5,1274.0 1382.8,1273.8 1396.0,1273.3 1409.2,1273.3 1422.5,1273.2 1435.8,1272.9 1449.0,1272.8 1462.2,1272.7 1475.5,1272.7 1488.8,1272.2 1502.0,1271.9 1515.2,1271.8 1528.5,1271.8 1541.8,1271.8 1555.0,1271.6 1568.2,1271.3 1581.5,1271.1 1594.8,1271.2 1608.0,1271.0 1621.2,1270.8 1634.5,1270.6 1647.8,1270.3 1661.0,1270.2 1674.2,1270.3 1687.5,1269.8 1700.8,1269.8 1714.0,1269.6 1727.2,1269.6 1740.5,1269.3 1753.8,1269.2 1767.0,1268.8 1780.2,1269.0 1793.5,1268.6 1806.8,1268.6 1820.0,1268.2 1833.2,1268.4 1846.5,1268.1 1859.8,1267.9 1873.0,1267.6 1886.2,1267.7 1899.5,1267.4 1912.8,1267.3 1926.0,1267.1 1939.2,1266.9 1952.5,1266.5 1965.8,1266.6 1979.0,1266.2 1992.2,1266.4 2005.5,1265.9 2018.8,1266.0 2032.0,1265.9 2045.2,1265.5 2058.5,1265.2 2071.8,1265.4 2085.0,1265.2 2098.2,1264.8 2111.5,1264.9 2124.8,1264.8 2138.0,1264.7 2151.2,1264.5 2164.5,1264.1 2177.8,1263.8 2191.0,1263.6 2204.2,1263.7 2217.5,1263.7 2230.8,1263.4 2244.0,1263.0 2257.2,1262.8 2270.5,1262.8 2283.8,1262.8 2297.0,1262.5 2310.2,1262.3 2323.5,1262.1 2336.8,1262.1 2350.0,1261.6 2363.2,1261.5 2376.5,1261.7 2389.8,1261.4 2403.0,1261.0 2416.2,1261.1 2429.5,1260.6 2442.8,1260.7 2456.0,1260.4 2469.2,1260.2 2482.5,1260.3 2495.8,1260.1 2509.0,1259.9 2522.2,1259.6 2535.5,1259.4 2548.8,1259.5 2562.0,1259.0 2575.2,1259.0 2588.5,1259.0 2601.8,1258.7 2615.0,1258.3 2628.2,1258.3 2641.5,1258.1 2654.8,1257.8 2668.0,1257.6 2681.2,1257.5 2694.5,1257.5 2707.8,1257.5 2721.0,1257.5 2734.2,1257.5 2747.5,1257.2 2760.8,1256.9 2774.0,1256.8 2787.2,1256.7 2800.5,1256.7 2813.8,1256.5 2827.0,1256.2 2840.2,1256.1 2853.5,1256.2 2866.8,1255.7 2880.0,1255.4 2893.2,1255.3 2906.5,1255.1 2919.8,1255.0 2933.0,1255.0 2946.2,1254.7 2959.5,1254.7 2972.8,1254.7 2986.0,1254.4 2999.2,1254.3 3012.5,1253.8 3025.8,1253.8 3039.0,1253.7 3052.2,1253.5 3065.5,1253.6 3078.8,1253.2 3092.0,1253.0 3105.2,1253.0 3118.5,1252.9 3131.8,1252.6 3145.0,1252.5 3158.2,1252.2 3171.5,1252.3 3184.8,1252.2 3198.0,1251.9 3211.2,1251.6 3224.5,1251.4 3237.8,1251.3 3251.0,1251.0 3264.2,1251.1 3277.5,1251.1 3290.8,1250.7 3304.0,1250.6 3317.2,1250.5 3330.5,1250.1 3342.0,1250.1" fill="none" stroke="#3d82e6" stroke-width="1.5" stroke-linejoin="round"/><polyline points="839.5,1280.0 852.8,1280.0 866.0,1280.0 879.2,1279.9 892.5,1279.5 905.8,1279.2 919.0,1278.9 932.2,1279.0 945.5,1278.8 958.8,1278.6 972.0,1278.3 985.2,1277.8 998.5,1277.9 1011.8,1277.4 1025.0,1277.4 1038.2,1277.1 1051.5,1276.8 1064.8,1276.3 1078.0,1276.2 1091.2,1276.3 1104.5,1276.0 1117.8,1275.8 1131.0,1275.2 1144.2,1275.0 1157.5,1274.7 1170.8,1274.5 1184.0,1274.3 1197.2,1274.0 1210.5,1273.8 1223.8,1273.9 1237.0,1273.4 1250.2,1273.3 1263.5,1273.0 1276.8,1272.8 1290.0,1272.7 1303.2,1272.5 1316.5,1272.2 1329.8,1272.1 1343.0,1272.0 1356.2,1271.3 1369.5,1271.1 1382.8,1270.8 1396.0,1270.7 1409.2,1270.6 1422.5,1270.3 1435.8,1270.4 1449.0,1269.8 1462.2,1269.8 1475.5,1269.7 1488.8,1269.4 1502.0,1269.0 1515.2,1269.0 1528.5,1268.6 1541.8,1268.3 1555.0,1268.2 1568.2,1268.1 1581.5,1267.7 1594.8,1267.6 1608.0,1267.4 1621.2,1267.2 1634.5,1266.9 1647.8,1266.8 1661.0,1266.3 1674.2,1265.9 1687.5,1266.0 1700.8,1265.6 1714.0,1265.2 1727.2,1265.4 1740.5,1265.2 1753.8,1264.6 1767.0,1264.4 1780.2,1264.3 1793.5,1264.3 1806.8,1263.9 1820.0,1263.5 1833.2,1263.2 1846.5,1263.1 1859.8,1263.2 1873.0,1262.6 1886.2,1262.6 1899.5,1262.2 1912.8,1262.3 1926.0,1261.6 1939.2,1261.6 1952.5,1261.3 1965.8,1261.4 1979.0,1260.9 1992.2,1260.7 2005.5,1260.5 2018.8,1260.4 2032.0,1260.0 2045.2,1260.0 2058.5,1259.8 2071.8,1259.6 2085.0,1259.1 2098.2,1259.2 2111.5,1258.9 2124.8,1258.8 2138.0,1258.2 2151.2,1258.0 2164.5,1257.8 2177.8,1257.9 2191.0,1257.4 2204.2,1257.2 2217.5,1257.1 2230.8,1257.0 2244.0,1256.2 2257.2,1256.4 2270.5,1256.1 2283.8,1255.9 2297.0,1255.5 2310.2,1255.5 2323.5,1255.1 2336.8,1254.9 2350.0,1254.4 2363.2,1254.6 2376.5,1254.2 2389.8,1253.9 2403.0,1253.4 2416.2,1253.4 2429.5,1253.2 2442.8,1252.9 2456.0,1252.8 2469.2,1252.8 2482.5,1252.3 2495.8,1251.8 2509.0,1251.7 2522.2,1251.7 2535.5,1251.2 2548.8,1250.9 2562.0,1251.0 2575.2,1250.6 2588.5,1250.5 2601.8,1250.3 2615.0,1250.1 2628.2,1249.9 2641.5,1249.6 2654.8,1249.5 2668.0,1249.1 2681.2,1249.0 2694.5,1248.4 2707.8,1248.4 2721.0,1248.4 2734.2,1248.4 2747.5,1248.1 2760.8,1248.2 2774.0,1247.5 2787.2,1247.7 2800.5,1247.3 2813.8,1247.0 2827.0,1246.9 2840.2,1246.7 2853.5,1246.4 2866.8,1246.4 2880.0,1245.7 2893.2,1245.9 2906.5,1245.3 2919.8,1245.4 2933.0,1245.1 2946.2,1244.9 2959.5,1244.9 2972.8,1244.6 2986.0,1244.2 2999.2,1244.0 3012.5,1243.5 3025.8,1243.2 3039.0,1243.4 3052.2,1243.0 3065.5,1243.0 3078.8,1242.4 3092.0,1242.5 3105.2,1241.9 3118.5,1241.9 3131.8,1241.9 3145.0,1241.8 3158.2,1241.4 3171.5,1240.8 3184.8,1241.0 3198.0,1240.6 3211.2,1240.4 3224.5,1240.2 3237.8,1239.7 3251.0,1239.9 3264.2,1239.3 3277.5,1239.1 3290.8,1238.8 3304.0,1238.8 3317.2,1238.3 3330.5,1238.4 3342.0,1238.2" fill="none" stroke="#705DA0" stroke-width="1.5" stroke-linejoin="round"/><polyline points="839.5,1280.0 852.8,1280.0 866.0,1280.0 879.2,1279.9 892.5,1278.9 905.8,1278.5 919.0,1277.8 932.2,1277.9 945.5,1277.4 958.8,1276.5 972.0,1276.1 985.2,1276.0 998.5,1275.2 1011.8,1274.9 1025.0,1274.1 1038.2,1274.2 1051.5,1273.7 1064.8,1272.6 1078.0,1272.6 1091.2,1272.2 1104.5,1271.3 1117.8,1270.9 1131.0,1270.9 1144.2,1270.1 1157.5,1269.5 1170.8,1269.5 1184.0,1268.6 1197.2,1268.7 1210.5,1268.0 1223.8,1267.8 1237.0,1267.2 1250.2,1266.0 1263.5,1266.1 1276.8,1265.1 1290.0,1265.1 1303.2,1264.5 1316.5,1263.8 1329.8,1263.5 1343.0,1263.6 1356.2,1262.7 1369.5,1262.2 1382.8,1262.2 1396.0,1261.8 1409.2,1260.6 1422.5,1260.5 1435.8,1260.3 1449.0,1259.6 1462.2,1259.4 1475.5,1258.4 1488.8,1258.2 1502.0,1258.1 1515.2,1257.0 1528.5,1257.2 1541.8,1256.6 1555.0,1256.4 1568.2,1255.3 1581.5,1255.4 1594.8,1254.6 1608.0,1254.5 1621.2,1253.7 1634.5,1253.1 1647.8,1252.7 1661.0,1252.4 1674.2,1251.9 1687.5,1251.5 1700.8,1250.9 1714.0,1250.9 1727.2,1250.1 1740.5,1249.8 1753.8,1248.8 1767.0,1248.3 1780.2,1248.5 1793.5,1248.1 1806.8,1247.1 1820.0,1246.8 1833.2,1246.8 1846.5,1245.8 1859.8,1245.1 1873.0,1245.1 1886.2,1244.7 1899.5,1244.1 1912.8,1243.3 1926.0,1243.4 1939.2,1242.9 1952.5,1242.6 1965.8,1241.7 1979.0,1241.4 1992.2,1241.2 2005.5,1240.6 2018.8,1240.5 2032.0,1239.7 2045.2,1238.7 2058.5,1238.6 2071.8,1238.4 2085.0,1237.3 2098.2,1237.4 2111.5,1237.1 2124.8,1236.8 2138.0,1236.3 2151.2,1235.8 2164.5,1235.3 2177.8,1234.2 2191.0,1234.3 2204.2,1233.8 2217.5,1233.0 2230.8,1232.3 2244.0,1232.4 2257.2,1231.5 2270.5,1231.4 2283.8,1230.7 2297.0,1230.2 2310.2,1229.4 2323.5,1229.1 2336.8,1228.9 2350.0,1228.1 2363.2,1228.1 2376.5,1227.6 2389.8,1226.6 2403.0,1226.5 2416.2,1225.8 2429.5,1225.7 2442.8,1224.7 2456.0,1224.5 2469.2,1224.4 2482.5,1223.3 2495.8,1223.2 2509.0,1222.9 2522.2,1222.5 2535.5,1222.2 2548.8,1221.6 2562.0,1220.7 2575.2,1220.7 2588.5,1220.1 2601.8,1219.5 2615.0,1218.9 2628.2,1218.6 2641.5,1217.8 2654.8,1217.8 2668.0,1217.2 2681.2,1216.7 2694.5,1216.5 2707.8,1216.5 2721.0,1216.5 2734.2,1216.5 2747.5,1215.6 2760.8,1215.2 2774.0,1214.2 2787.2,1214.3 2800.5,1213.4 2813.8,1213.3 2827.0,1212.5 2840.2,1212.0 2853.5,1211.9 2866.8,1210.9 2880.0,1210.7 2893.2,1210.3 2906.5,1210.3 2919.8,1209.5 2933.0,1209.2 2946.2,1208.6 2959.5,1207.7 2972.8,1207.3 2986.0,1207.5 2999.2,1206.6 3012.5,1205.9 3025.8,1205.8 3039.0,1205.8 3052.2,1204.6 3065.5,1204.6 3078.8,1203.6 3092.0,1203.2 3105.2,1202.8 3118.5,1202.3 3131.8,1202.5 3145.0,1201.5 3158.2,1201.5 3171.5,1201.2 3184.8,1200.5 3198.0,1199.9 3211.2,1200.0 3224.5,1199.1 3237.8,1198.3 3251.0,1198.2 3264.2,1197.7 3277.5,1197.4 3290.8,1196.4 3304.0,1196.6 3317.2,1195.7 3330.5,1195.3 3342.0,1195.1" fill="none" stroke="#584477" stroke-width="1.5" stroke-linejoin="round"/><polyline points="839.5,1280.0 852.8,1280.0 866.0,1280.0 879.2,1279.9 892.5,1278.9 905.8,1278.4 919.0,1277.6 932.2,1277.8 945.5,1277.3 958.8,1276.3 972.0,1275.9 985.2,1275.7 998.5,1274.9 1011.8,1274.6 1025.0,1273.8 1038.2,1273.9 1051.5,1273.3 1064.8,1272.1 1078.0,1272.2 1091.2,1271.8 1104.5,1270.7 1117.8,1270.4 1131.0,1270.4 1144.2,1269.5 1157.5,1268.9 1170.8,1268.9 1184.0,1268.0 1197.2,1268.0 1210.5,1267.3 1223.8,1267.0 1237.0,1266.4 1250.2,1265.2 1263.5,1265.3 1276.8,1264.2 1290.0,1264.3 1303.2,1263.6 1316.5,1262.9 1329.8,1262.6 1343.0,1262.6 1356.2,1261.7 1369.5,1261.1 1382.8,1261.1 1396.0,1260.7 1409.2,1259.5 1422.5,1259.3 1435.8,1259.2 1449.0,1258.4 1462.2,1258.2 1475.5,1257.1 1488.8,1256.9 1502.0,1256.8 1515.2,1255.7 1528.5,1255.9 1541.8,1255.2 1555.0,1255.0 1568.2,1253.8 1581.5,1253.9 1594.8,1253.0 1608.0,1253.0 1621.2,1252.1 1634.5,1251.4 1647.8,1251.1 1661.0,1250.7 1674.2,1250.2 1687.5,1249.8 1700.8,1249.1 1714.0,1249.1 1727.2,1248.3 1740.5,1248.0 1753.8,1246.9 1767.0,1246.4 1780.2,1246.6 1793.5,1246.2 1806.8,1245.2 1820.0,1244.8 1833.2,1244.9 1846.5,1243.7 1859.8,1243.0 1873.0,1243.0 1886.2,1242.6 1899.5,1241.9 1912.8,1241.1 1926.0,1241.2 1939.2,1240.7 1952.5,1240.3 1965.8,1239.4 1979.0,1239.1 1992.2,1238.8 2005.5,1238.2 2018.8,1238.1 2032.0,1237.3 2045.2,1236.2 2058.5,1236.1 2071.8,1235.9 2085.0,1234.8 2098.2,1234.9 2111.5,1234.5 2124.8,1234.2 2138.0,1233.6 2151.2,1233.1 2164.5,1232.6 2177.8,1231.5 2191.0,1231.6 2204.2,1231.1 2217.5,1230.2 2230.8,1229.4 2244.0,1229.5 2257.2,1228.6 2270.5,1228.5 2283.8,1227.8 2297.0,1227.2 2310.2,1226.4 2323.5,1226.1 2336.8,1225.8 2350.0,1225.0 2363.2,1225.0 2376.5,1224.4 2389.8,1223.4 2403.0,1223.3 2416.2,1222.6 2429.5,1222.5 2442.8,1221.4 2456.0,1221.2 2469.2,1221.1 2482.5,1219.9 2495.8,1219.9 2509.0,1219.5 2522.2,1219.1 2535.5,1218.7 2548.8,1218.1 2562.0,1217.1 2575.2,1217.2 2588.5,1216.6 2601.8,1215.9 2615.0,1215.3 2628.2,1214.9 2641.5,1214.0 2654.8,1214.1 2668.0,1213.4 2681.2,1212.9 2694.5,1212.7 2707.8,1212.7 2721.0,1212.7 2734.2,1212.7 2747.5,1211.7 2760.8,1211.3 2774.0,1210.3 2787.2,1210.4 2800.5,1209.4 2813.8,1209.3 2827.0,1208.5 2840.2,1208.0 2853.5,1207.8 2866.8,1206.7 2880.0,1206.5 2893.2,1206.2 2906.5,1206.2 2919.8,1205.3 2933.0,1205.0 2946.2,1204.3 2959.5,1203.4 2972.8,1203.0 2986.0,1203.2 2999.2,1202.2 3012.5,1201.5 3025.8,1201.4 3039.0,1201.3 3052.2,1200.1 3065.5,1200.0 3078.8,1199.0 3092.0,1198.7 3105.2,1198.2 3118.5,1197.6 3131.8,1197.8 3145.0,1196.8 3158.2,1196.8 3171.5,1196.5 3184.8,1195.8 3198.0,1195.1 3211.2,1195.2 3224.5,1194.3 3237.8,1193.5 3251.0,1193.3 3264.2,1192.8 3277.5,1192.5 3290.8,1191.4 3304.0,1191.6 3317.2,1190.7 3330.5,1190.3 3342.0,1190.0" fill="none" stroke="#B877D9" stroke-width="1.5" stroke-linejoin="round"/><polyline points="839.5,1280.0 852.8,1280.0 866.0,1280.0 879.2,1278.0 892.5,1277.4 905.8,1275.0 919.0,1274.0 932.2,1271.4 945.5,1270.8 958.8,1268.2 972.0,1266.8 985.2,1265.0 998.5,1263.2 1011.8,1262.3 1025.0,1260.6 1038.2,1258.5 1051.5,1257.4 1064.8,1255.7 1078.0,1254.1 1091.2,1251.8 1104.5,1250.1 1117.8,1248.6 1131.0,1247.6 1144.2,1245.2 1157.5,1244.1 1170.8,1242.8 1184.0,1241.0 1197.2,1239.4 1210.5,1238.2 1223.8,1236.0 1237.0,1234.7 1250.2,1232.8 1263.5,1230.8 1276.8,1229.5 1290.0,1228.2 1303.2,1226.1 1316.5,1224.3 1329.8,1223.3 1343.0,1221.2 1356.2,1220.6 1369.5,1218.9 1382.8,1217.3 1396.0,1214.8 1409.2,1213.5 1422.5,1211.9 1435.8,1210.8 1449.0,1209.0 1462.2,1207.0 1475.5,1206.3 1488.8,1204.6 1502.0,1203.1 1515.2,1201.1 1528.5,1199.1 1541.8,1197.8 1555.0,1196.4 1568.2,1194.7 1581.5,1193.5 1594.8,1191.1 1608.0,1190.1 1621.2,1188.7 1634.5,1187.0 1647.8,1184.9 1661.0,1183.8 1674.2,1181.6 1687.5,1180.6 1700.8,1178.9 1714.0,1177.8 1727.2,1175.3 1740.5,1173.8 1753.8,1172.6 1767.0,1171.4 1780.2,1169.4 1793.5,1167.9 1806.8,1165.8 1820.0,1164.2 1833.2,1162.8 1846.5,1161.7 1859.8,1160.4 1873.0,1157.9 1886.2,1156.2 1899.5,1155.5 1912.8,1153.5 1926.0,1152.0 1939.2,1149.8 1952.5,1149.3 1965.8,1147.7 1979.0,1145.2 1992.2,1144.0 2005.5,1142.5 2018.8,1140.6 2032.0,1139.2 2045.2,1137.5 2058.5,1136.4 2071.8,1135.0 2085.0,1133.5 2098.2,1131.5 2111.5,1129.6 2124.8,1128.3 2138.0,1126.8 2151.2,1124.9 2164.5,1123.2 2177.8,1121.7 2191.0,1120.4 2204.2,1118.2 2217.5,1116.5 2230.8,1114.8 2244.0,1113.1 2257.2,1112.5 2270.5,1110.1 2283.8,1108.8 2297.0,1107.1 2310.2,1105.3 2323.5,1104.1 2336.8,1102.3 2350.0,1099.9 2363.2,1099.0 2376.5,1096.7 2389.8,1095.3 2403.0,1094.1 2416.2,1092.4 2429.5,1090.5 2442.8,1088.7 2456.0,1087.5 2469.2,1086.1 2482.5,1084.4 2495.8,1082.0 2509.0,1080.5 2522.2,1079.5 2535.5,1077.1 2548.8,1075.7 2562.0,1074.3 2575.2,1072.1 2588.5,1071.3 2601.8,1069.7 2615.0,1067.7 2628.2,1065.7 2641.5,1064.2 2654.8,1062.7 2668.0,1060.5 2681.2,1059.5 2694.5,1057.4 2707.8,1057.4 2721.0,1057.4 2734.2,1057.4 2747.5,1055.5 2760.8,1053.0 2774.0,1052.2 2787.2,1050.0 2800.5,1048.3 2813.8,1046.9 2827.0,1045.4 2840.2,1043.9 2853.5,1042.1 2866.8,1040.9 2880.0,1039.5 2893.2,1037.6 2906.5,1036.0 2919.8,1034.9 2933.0,1032.9 2946.2,1031.4 2959.5,1030.1 2972.8,1028.0 2986.0,1026.3 2999.2,1025.2 3012.5,1023.1 3025.8,1021.4 3039.0,1020.1 3052.2,1018.8 3065.5,1017.4 3078.8,1016.0 3092.0,1014.3 3105.2,1011.9 3118.5,1011.4 3131.8,1008.8 3145.0,1007.5 3158.2,1005.8 3171.5,1005.0 3184.8,1002.8 3198.0,1001.8 3211.2,999.7 3224.5,998.0 3237.8,996.5 3251.0,995.1 3264.2,993.1 3277.5,992.3 3290.8,990.8 3304.0,988.4 3317.2,987.8 3330.5,985.8 3342.0,984.3" fill="none" stroke="#FADE2A" stroke-width="1.5" stroke-linejoin="round"/><polyline points="839.5,1280.0 852.8,1280.0 866.0,1280.0 879.2,1278.0 892.5,1277.4 905.8,1274.9 919.0,1273.9 932.2,1271.3 945.5,1270.7 958.8,1268.1 972.0,1266.6 985.2,1264.7 998.5,1262.9 1011.8,1262.0 1025.0,1260.3 1038.2,1258.2 1051.5,1257.0 1064.8,1255.3 1078.0,1253.7 1091.2,1251.3 1104.5,1249.6 1117.8,1248.1 1131.0,1247.1 1144.2,1244.7 1157.5,1243.5 1170.8,1242.2 1184.0,1240.3 1197.2,1238.7 1210.5,1237.5 1223.8,1235.3 1237.0,1233.9 1250.2,1232.0 1263.5,1230.0 1276.8,1228.7 1290.0,1227.3 1303.2,1225.2 1316.5,1223.4 1329.8,1222.4 1343.0,1220.2 1356.2,1219.6 1369.5,1217.9 1382.8,1216.2 1396.0,1213.8 1409.2,1212.4 1422.5,1210.8 1435.8,1209.6 1449.0,1207.8 1462.2,1205.8 1475.5,1205.0 1488.8,1203.4 1502.0,1201.9 1515.2,1199.8 1528.5,1197.8 1541.8,1196.5 1555.0,1195.0 1568.2,1193.3 1581.5,1192.0 1594.8,1189.6 1608.0,1188.6 1621.2,1187.2 1634.5,1185.5 1647.8,1183.3 1661.0,1182.2 1674.2,1180.0 1687.5,1179.0 1700.8,1177.3 1714.0,1176.1 1727.2,1173.5 1740.5,1172.0 1753.8,1170.8 1767.0,1169.6 1780.2,1167.5 1793.5,1166.1 1806.8,1163.9 1820.0,1162.2 1833.2,1160.8 1846.5,1159.7 1859.8,1158.4 1873.0,1155.8 1886.2,1154.2 1899.5,1153.4 1912.8,1151.4 1926.0,1149.8 1939.2,1147.7 1952.5,1147.1 1965.8,1145.5 1979.0,1143.0 1992.2,1141.7 2005.5,1140.2 2018.8,1138.2 2032.0,1136.8 2045.2,1135.1 2058.5,1134.0 2071.8,1132.6 2085.0,1131.0 2098.2,1129.1 2111.5,1127.1 2124.8,1125.8 2138.0,1124.2 2151.2,1122.3 2164.5,1120.6 2177.8,1119.1 2191.0,1117.7 2204.2,1115.5 2217.5,1113.8 2230.8,1112.0 2244.0,1110.4 2257.2,1109.7 2270.5,1107.3 2283.8,1106.0 2297.0,1104.2 2310.2,1102.4 2323.5,1101.2 2336.8,1099.4 2350.0,1096.9 2363.2,1096.0 2376.5,1093.6 2389.8,1092.2 2403.0,1091.0 2416.2,1089.3 2429.5,1087.3 2442.8,1085.5 2456.0,1084.3 2469.2,1082.9 2482.5,1081.1 2495.8,1078.7 2509.0,1077.1 2522.2,1076.2 2535.5,1073.7 2548.8,1072.3 2562.0,1070.9 2575.2,1068.6 2588.5,1067.8 2601.8,1066.1 2615.0,1064.2 2628.2,1062.1 2641.5,1060.6 2654.8,1059.0 2668.0,1056.9 2681.2,1055.8 2694.5,1053.7 2707.8,1053.7 2721.0,1053.7 2734.2,1053.7 2747.5,1051.7 2760.8,1049.3 2774.0,1048.4 2787.2,1046.2 2800.5,1044.4 2813.8,1043.0 2827.0,1041.5 2840.2,1039.9 2853.5,1038.1 2866.8,1036.9 2880.0,1035.5 2893.2,1033.5 2906.5,1032.0 2919.8,1030.8 2933.0,1028.8 2946.2,1027.2 2959.5,1026.0 2972.8,1023.8 2986.0,1022.1 2999.2,1021.0 3012.5,1018.8 3025.8,1017.1 3039.0,1015.8 3052.2,1014.5 3065.5,1013.0 3078.8,1011.6 3092.0,1009.8 3105.2,1007.4 3118.5,1006.9 3131.8,1004.3 3145.0,1003.0 3158.2,1001.3 3171.5,1000.4 3184.8,998.2 3198.0,997.1 3211.2,995.0 3224.5,993.3 3237.8,991.8 3251.0,990.4 3264.2,988.4 3277.5,987.5 3290.8,986.0 3304.0,983.6 3317.2,982.9 3330.5,980.9 3342.0,979.4" fill="none" stroke="#C15C17" stroke-width="1.5" stroke-linejoin="round"/><path d="M839.5 1279.7H867" stroke="#5560d8" stroke-width="1.5" fill="none"/></svg>
<span class="a t" id="t43" style="top:909.1px;line-height:29px;height:29px;font-size:19.2px;color:#ccccdc;right:3254.5px;-webkit-text-stroke:0.3px currentColor;letter-spacing:0.028px;margin-right:-0.028px;">14000</span>
<span class="a t" id="t44" style="top:959.8px;line-height:29px;height:29px;font-size:19.2px;color:#ccccdc;right:3254.5px;-webkit-text-stroke:0.3px currentColor;letter-spacing:0.028px;margin-right:-0.028px;">12000</span>
<span class="a t" id="t45" style="top:1010.5px;line-height:29px;height:29px;font-size:19.2px;color:#ccccdc;right:3254.5px;-webkit-text-stroke:0.3px currentColor;letter-spacing:0.028px;margin-right:-0.028px;">10000</span>
<span class="a t" id="t46" style="top:1061.2px;line-height:29px;height:29px;font-size:19.2px;color:#ccccdc;right:3254.5px;-webkit-text-stroke:0.3px currentColor;letter-spacing:0.078px;margin-right:-0.078px;">8000</span>
<span class="a t" id="t47" style="top:1112.0px;line-height:29px;height:29px;font-size:19.2px;color:#ccccdc;right:3254.5px;-webkit-text-stroke:0.3px currentColor;letter-spacing:0.078px;margin-right:-0.078px;">6000</span>
<span class="a t" id="t48" style="top:1162.7px;line-height:29px;height:29px;font-size:19.2px;color:#ccccdc;right:3254.5px;-webkit-text-stroke:0.3px currentColor;letter-spacing:0.078px;margin-right:-0.078px;">4000</span>
<span class="a t" id="t49" style="top:1213.4px;line-height:29px;height:29px;font-size:19.2px;color:#ccccdc;right:3254.5px;-webkit-text-stroke:0.3px currentColor;letter-spacing:0.078px;margin-right:-0.078px;">2000</span>
<span class="a t" id="t50" style="top:1264.1px;line-height:29px;height:29px;font-size:19.2px;color:#ccccdc;right:3254.5px;-webkit-text-stroke:0.3px currentColor;letter-spacing:-0.672px;margin-right:0.672px;">0</span>
<div class="a t" style="top:1286.9px;line-height:29px;height:29px;font-size:19.2px;color:#ccccdc;left:-690.5px;width:2000px;text-align:center;-webkit-text-stroke:0.3px currentColor;letter-spacing:-0.003px;"><span id="t51">23:25</span></div>
<div class="a t" style="top:1286.9px;line-height:29px;height:29px;font-size:19.2px;color:#ccccdc;left:-425.5899999999999px;width:2000px;text-align:center;-webkit-text-stroke:0.3px currentColor;letter-spacing:-0.003px;"><span id="t52">23:30</span></div>
<div class="a t" style="top:1286.9px;line-height:29px;height:29px;font-size:19.2px;color:#ccccdc;left:-160.67999999999995px;width:2000px;text-align:center;-webkit-text-stroke:0.3px currentColor;letter-spacing:-0.003px;"><span id="t53">23:35</span></div>
<div class="a t" style="top:1286.9px;line-height:29px;height:29px;font-size:19.2px;color:#ccccdc;left:104.23000000000002px;width:2000px;text-align:center;-webkit-text-stroke:0.3px currentColor;letter-spacing:-0.003px;"><span id="t54">23:40</span></div>
<div class="a t" style="top:1286.9px;line-height:29px;height:29px;font-size:19.2px;color:#ccccdc;left:369.1400000000001px;width:2000px;text-align:center;-webkit-text-stroke:0.3px currentColor;letter-spacing:-0.003px;"><span id="t55">23:45</span></div>
<div class="a t" style="top:1286.9px;line-height:29px;height:29px;font-size:19.2px;color:#ccccdc;left:634.0500000000002px;width:2000px;text-align:center;-webkit-text-stroke:0.3px currentColor;letter-spacing:-0.003px;"><span id="t56">23:50</span></div>
<div class="a t" style="top:1286.9px;line-height:29px;height:29px;font-size:19.2px;color:#ccccdc;left:898.96px;width:2000px;text-align:center;-webkit-text-stroke:0.3px currentColor;letter-spacing:-0.003px;"><span id="t57">23:55</span></div>
<div class="a t" style="top:1286.9px;line-height:29px;height:29px;font-size:19.2px;color:#ccccdc;left:1163.87px;width:2000px;text-align:center;-webkit-text-stroke:0.3px currentColor;letter-spacing:-0.003px;"><span id="t58">00:00</span></div>
<div class="a t" style="top:1286.9px;line-height:29px;height:29px;font-size:19.2px;color:#ccccdc;left:1428.7800000000002px;width:2000px;text-align:center;-webkit-text-stroke:0.3px currentColor;letter-spacing:-0.003px;"><span id="t59">00:05</span></div>
<div class="a t" style="top:1286.9px;line-height:29px;height:29px;font-size:19.2px;color:#ccccdc;left:1693.69px;width:2000px;text-align:center;-webkit-text-stroke:0.3px currentColor;letter-spacing:-0.003px;"><span id="t60">00:10</span></div>
<div class="a t" style="top:1286.9px;line-height:29px;height:29px;font-size:19.2px;color:#ccccdc;left:1958.6000000000004px;width:2000px;text-align:center;-webkit-text-stroke:0.3px currentColor;letter-spacing:-0.003px;"><span id="t61">00:15</span></div>
<div class="a t" style="top:1286.9px;line-height:29px;height:29px;font-size:19.2px;color:#ccccdc;left:2223.51px;width:2000px;text-align:center;-webkit-text-stroke:0.3px currentColor;letter-spacing:-0.003px;"><span id="t62">00:20</span></div>
<div class="a" style="left:100px;top:1316px;width:3290px;height:222.6px;overflow:hidden;">
<div class="a" style="left:33px;top:16.100000000000364px;width:22px;height:6.2px;background:#73BF69;border-radius:1.6px;"></div>
<span class="a t" id="t63" style="top:4.1px;line-height:29px;height:29px;font-size:19.2px;color:#ccccdc;left:68px;-webkit-text-stroke:0.3px currentColor;letter-spacing:-0.196px;white-space:pre;">{__name__="calls_total", </span>
<span class="a t" id="t64" style="top:4.1px;line-height:29px;height:29px;font-size:19.2px;color:#ccccdc;left:281px;-webkit-text-stroke:0.3px currentColor;letter-spacing:0.182px;white-space:pre;">instance="otelcol:9464", </span>
<span class="a t" id="t65" style="top:4.1px;line-height:29px;height:29px;font-size:19.2px;color:#ccccdc;left:496px;-webkit-text-stroke:0.3px currentColor;letter-spacing:-0.003px;white-space:pre;">job="otel", </span>
<span class="a t" id="t66" style="top:4.1px;line-height:29px;height:29px;font-size:19.2px;color:#ccccdc;left:588px;-webkit-text-stroke:0.3px currentColor;letter-spacing:0.177px;white-space:pre;">operation="/", </span>
<span class="a t" id="t67" style="top:4.1px;line-height:29px;height:29px;font-size:19.2px;color:#ccccdc;left:711.5px;-webkit-text-stroke:0.3px currentColor;letter-spacing:0.132px;white-space:pre;">service_name="featureflagservice", </span>
<span class="a t" id="t68" style="top:4.1px;line-height:29px;height:29px;font-size:19.2px;color:#ccccdc;left:1022.5px;-webkit-text-stroke:0.3px currentColor;letter-spacing:-0.552px;white-space:pre;">span_kind="SPAN_KIND_SERVER", </span>
<span class="a t" id="t69" style="top:4.1px;line-height:29px;height:29px;font-size:19.2px;color:#ccccdc;left:1325.5px;-webkit-text-stroke:0.3px currentColor;letter-spacing:-0.433px;white-space:pre;">status_code="STATUS_CODE_UNSET"}</span>
<div class="a" style="left:33px;top:51.18000000000029px;width:22px;height:6.2px;background:#F2CC0C;border-radius:1.6px;"></div>
<span class="a t" id="t70" style="top:39.2px;line-height:29px;height:29px;font-size:19.2px;color:#ccccdc;left:68px;-webkit-text-stroke:0.3px currentColor;letter-spacing:-0.196px;white-space:pre;">{__name__="calls_total", </span>
<span class="a t" id="t71" style="top:39.2px;line-height:29px;height:29px;font-size:19.2px;color:#ccccdc;left:281px;-webkit-text-stroke:0.3px currentColor;letter-spacing:0.182px;white-space:pre;">instance="otelcol:9464", </span>
<span class="a t" id="t72" style="top:39.2px;line-height:29px;height:29px;font-size:19.2px;color:#ccccdc;left:496px;-webkit-text-stroke:0.3px currentColor;letter-spacing:-0.003px;white-space:pre;">job="otel", </span>
<span class="a t" id="t73" style="top:39.2px;line-height:29px;height:29px;font-size:19.2px;color:#ccccdc;left:588px;-webkit-text-stroke:0.3px currentColor;letter-spacing:0.238px;white-space:pre;">operation="/getquote", </span>
<span class="a t" id="t74" style="top:39.2px;line-height:29px;height:29px;font-size:19.2px;color:#ccccdc;left:789px;-webkit-text-stroke:0.3px currentColor;letter-spacing:0.044px;white-space:pre;">service_name="quoteservice", </span>
<span class="a t" id="t75" style="top:39.2px;line-height:29px;height:29px;font-size:19.2px;color:#ccccdc;left:1054px;-webkit-text-stroke:0.3px currentColor;letter-spacing:-0.535px;white-space:pre;">span_kind="SPAN_KIND_SERVER", </span>
<span class="a t" id="t76" style="top:39.2px;line-height:29px;height:29px;font-size:19.2px;color:#ccccdc;left:1357.5px;-webkit-text-stroke:0.3px currentColor;letter-spacing:-0.399px;white-space:pre;">status_code="STATUS_CODE_OK"}</span>
<div class="a" style="left:33px;top:86.26000000000045px;width:22px;height:6.2px;background:#8AB8FF;border-radius:1.6px;"></div>
<span class="a t" id="t77" style="top:74.3px;line-height:29px;height:29px;font-size:19.2px;color:#ccccdc;left:68px;-webkit-text-stroke:0.3px currentColor;letter-spacing:-0.196px;white-space:pre;">{__name__="calls_total", </span>
<span class="a t" id="t78" style="top:74.3px;line-height:29px;height:29px;font-size:19.2px;color:#ccccdc;left:281px;-webkit-text-stroke:0.3px currentColor;letter-spacing:0.182px;white-space:pre;">instance="otelcol:9464", </span>
<span class="a t" id="t79" style="top:74.3px;line-height:29px;height:29px;font-size:19.2px;color:#ccccdc;left:496px;-webkit-text-stroke:0.3px currentColor;letter-spacing:-0.003px;white-space:pre;">job="otel", </span>
<span class="a t" id="t80" style="top:74.3px;line-height:29px;height:29px;font-size:19.2px;color:#ccccdc;left:588px;-webkit-text-stroke:0.3px currentColor;letter-spacing:0.191px;white-space:pre;">operation="/hipstershop.FeatureFlagService/GetFlag", </span>
<span class="a t" id="t81" style="top:74.3px;line-height:29px;height:29px;font-size:19.2px;color:#ccccdc;left:1064.5px;-webkit-text-stroke:0.3px currentColor;letter-spacing:0.117px;white-space:pre;">service_name="featureflagservice", </span>
<span class="a t" id="t82" style="top:74.3px;line-height:29px;height:29px;font-size:19.2px;color:#ccccdc;left:1375px;-webkit-text-stroke:0.3px currentColor;letter-spacing:-0.480px;white-space:pre;">span_kind="SPAN_KIND_INTERNAL", </span>
<span class="a t" id="t83" style="top:74.3px;line-height:29px;height:29px;font-size:19.2px;color:#ccccdc;left:1695.5px;-webkit-text-stroke:0.3px currentColor;letter-spacing:-0.402px;white-space:pre;">status_code="STATUS_CODE_UNSET"}</span>
<div class="a" style="left:33px;top:121.34000000000037px;width:22px;height:6.2px;background:#FF780A;border-radius:1.6px;"></div>
<span class="a t" id="t84" style="top:109.3px;line-height:29px;height:29px;font-size:19.2px;color:#ccccdc;left:68px;-webkit-text-stroke:0.3px currentColor;letter-spacing:-0.196px;white-space:pre;">{__name__="calls_total", </span>
<span class="a t" id="t85" style="top:109.3px;line-height:29px;height:29px;font-size:19.2px;color:#ccccdc;left:281px;-webkit-text-stroke:0.3px currentColor;letter-spacing:0.182px;white-space:pre;">instance="otelcol:9464", </span>
<span class="a t" id="t86" style="top:109.3px;line-height:29px;height:29px;font-size:19.2px;color:#ccccdc;left:496px;-webkit-text-stroke:0.3px currentColor;letter-spacing:-0.003px;white-space:pre;">job="otel", </span>
<span class="a t" id="t87" style="top:109.3px;line-height:29px;height:29px;font-size:19.2px;color:#ccccdc;left:588px;-webkit-text-stroke:0.3px currentColor;letter-spacing:0.328px;white-space:pre;">operation="/hipstershop.ProductCatalogService/ListProducts", </span>
<span class="a t" id="t88" style="top:109.3px;line-height:29px;height:29px;font-size:19.2px;color:#ccccdc;left:1140.5px;-webkit-text-stroke:0.3px currentColor;letter-spacing:0.155px;white-space:pre;">service_name="recommendationservice", </span>
<span class="a t" id="t89" style="top:109.3px;line-height:29px;height:29px;font-size:19.2px;color:#ccccdc;left:1505px;-webkit-text-stroke:0.3px currentColor;letter-spacing:-0.391px;white-space:pre;">span_kind="SPAN_KIND_CLIENT", </span>
<span class="a t" id="t90" style="top:109.3px;line-height:29px;height:29px;font-size:19.2px;color:#ccccdc;left:1802.5px;-webkit-text-stroke:0.3px currentColor;letter-spacing:-0.402px;white-space:pre;">status_code="STATUS_CODE_UNSET"}</span>
<div class="a" style="left:33px;top:156.4200000000003px;width:22px;height:6.2px;background:#F2495C;border-radius:1.6px;"></div>
<span class="a t" id="t91" style="top:144.4px;line-height:29px;height:29px;font-size:19.2px;color:#ccccdc;left:68px;-webkit-text-stroke:0.3px currentColor;letter-spacing:-0.196px;white-space:pre;">{__name__="calls_total", </span>
<span class="a t" id="t92" style="top:144.4px;line-height:29px;height:29px;font-size:19.2px;color:#ccccdc;left:281px;-webkit-text-stroke:0.3px currentColor;letter-spacing:0.182px;white-space:pre;">instance="otelcol:9464", </span>
<span class="a t" id="t93" style="top:144.4px;line-height:29px;height:29px;font-size:19.2px;color:#ccccdc;left:496px;-webkit-text-stroke:0.3px currentColor;letter-spacing:-0.003px;white-space:pre;">job="otel", </span>
<span class="a t" id="t94" style="top:144.4px;line-height:29px;height:29px;font-size:19.2px;color:#ccccdc;left:588px;-webkit-text-stroke:0.3px currentColor;letter-spacing:0.318px;white-space:pre;">operation="/hipstershop.RecommendationService/ListRecommendations", </span>
<span class="a t" id="t95" style="top:144.4px;line-height:29px;height:29px;font-size:19.2px;color:#ccccdc;left:1244.5px;-webkit-text-stroke:0.3px currentColor;letter-spacing:0.155px;white-space:pre;">service_name="recommendationservice", </span>
<span class="a t" id="t96" style="top:144.4px;line-height:29px;height:29px;font-size:19.2px;color:#ccccdc;left:1609px;-webkit-text-stroke:0.3px currentColor;letter-spacing:-0.552px;white-space:pre;">span_kind="SPAN_KIND_SERVER", </span>
<span class="a t" id="t97" style="top:144.4px;line-height:29px;height:29px;font-size:19.2px;color:#ccccdc;left:1912px;-webkit-text-stroke:0.3px currentColor;letter-spacing:-0.417px;white-space:pre;">status_code="STATUS_CODE_UNSET"}</span>
<div class="a" style="left:33px;top:191.50000000000023px;width:22px;height:6.2px;background:#5794F2;border-radius:1.6px;"></div>
<span class="a t" id="t98" style="top:179.5px;line-height:29px;height:29px;font-size:19.2px;color:#ccccdc;left:68px;-webkit-text-stroke:0.3px currentColor;letter-spacing:-0.196px;white-space:pre;">{__name__="calls_total", </span>
<span class="a t" id="t99" style="top:179.5px;line-height:29px;height:29px;font-size:19.2px;color:#ccccdc;left:281px;-webkit-text-stroke:0.3px currentColor;letter-spacing:0.182px;white-space:pre;">instance="otelcol:9464", </span>
<span class="a t" id="t100" style="top:179.5px;line-height:29px;height:29px;font-size:19.2px;color:#ccccdc;left:496px;-webkit-text-stroke:0.3px currentColor;letter-spacing:-0.003px;white-space:pre;">job="otel", </span>
<span class="a t" id="t101" style="top:179.5px;line-height:29px;height:29px;font-size:19.2px;color:#ccccdc;left:588px;-webkit-text-stroke:0.3px currentColor;letter-spacing:0.099px;white-space:pre;">operation="CurrencyService/Convert", </span>
<span class="a t" id="t102" style="top:179.5px;line-height:29px;height:29px;font-size:19.2px;color:#ccccdc;left:921.5px;-webkit-text-stroke:0.3px currentColor;letter-spacing:0.038px;white-space:pre;">service_name="currencyservice", </span>
<span class="a t" id="t103" style="top:179.5px;line-height:29px;height:29px;font-size:19.2px;color:#ccccdc;left:1212px;-webkit-text-stroke:0.3px currentColor;letter-spacing:-0.552px;white-space:pre;">span_kind="SPAN_KIND_SERVER", </span>
<span class="a t" id="t104" style="top:179.5px;line-height:29px;height:29px;font-size:19.2px;color:#ccccdc;left:1515px;-webkit-text-stroke:0.3px currentColor;letter-spacing:-0.416px;white-space:pre;">status_code="STATUS_CODE_OK"}</span>
<div class="a" style="left:33px;top:226.10000000000014px;width:22px;height:6.2px;background:#B877D9;border-radius:1.6px;"></div>
<span class="a t" id="t105" style="top:214.1px;line-height:29px;height:29px;font-size:19.2px;color:#ccccdc;left:68px;-webkit-text-stroke:0.3px currentColor;letter-spacing:-0.196px;white-space:pre;">{__name__="calls_total", </span>
<span class="a t" id="t106" style="top:214.1px;line-height:29px;height:29px;font-size:19.2px;color:#ccccdc;left:281px;-webkit-text-stroke:0.3px currentColor;letter-spacing:0.182px;white-space:pre;">instance="otelcol:9464", </span>
<span class="a t" id="t107" style="top:214.1px;line-height:29px;height:29px;font-size:19.2px;color:#ccccdc;left:496px;-webkit-text-stroke:0.3px currentColor;letter-spacing:-0.003px;white-space:pre;">job="otel", </span>
<span class="a t" id="t108" style="top:214.1px;line-height:29px;height:29px;font-size:19.2px;color:#ccccdc;left:588px;-webkit-text-stroke:0.3px currentColor;letter-spacing:-0.648px;white-space:pre;">operation="grpc.hipstershop.CurrencyService/GetSupportedCurrencies", service_name="frontend", span_kind="SPAN_KIND_CLIENT", status_code="STATUS_CODE_UNSET", net_peer_name="currencyservice", net_peer_port="7001", rpc_method="GetSupportedCurrencies", rpc_service="hipstershop.CurrencyService", telemetry="otel"}</span>
</div>
<div class="a" style="left:93px;top:1565px;width:3312.5px;height:420px;background:#181b1f;border:1px solid rgba(204,204,220,0.07);border-radius:3px;"></div>
<span class="a t" id="t109" style="top:1579.6px;line-height:34px;height:34px;font-size:22.4px;color:#ccccdc;left:120px;font-weight:bold;letter-spacing:-0.366px;">Table</span>
<div class="a" style="left:107px;top:1642px;width:3285px;height:52.5px;background:#22252b;"></div>
<div class="a" style="left:470.3px;top:1642px;width:1.4px;height:320px;background:rgba(204,204,220,0.08);"></div>
<div class="a" style="left:835.3px;top:1642px;width:1.4px;height:320px;background:rgba(204,204,220,0.08);"></div>
<div class="a" style="left:1200.3px;top:1642px;width:1.4px;height:320px;background:rgba(204,204,220,0.08);"></div>
<div class="a" style="left:1565.3px;top:1642px;width:1.4px;height:320px;background:rgba(204,204,220,0.08);"></div>
<div class="a" style="left:1930.3px;top:1642px;width:1.4px;height:320px;background:rgba(204,204,220,0.08);"></div>
<div class="a" style="left:2295.3px;top:1642px;width:1.4px;height:320px;background:rgba(204,204,220,0.08);"></div>
<div class="a" style="left:2660.3px;top:1642px;width:1.4px;height:320px;background:rgba(204,204,220,0.08);"></div>
<div class="a" style="left:3025.3px;top:1642px;width:1.4px;height:320px;background:rgba(204,204,220,0.08);"></div>
<div class="a" style="left:107px;top:1749.8px;width:3285px;height:1.4px;background:rgba(204,204,220,0.08);"></div>
<div class="a" style="left:107px;top:1805.8px;width:3285px;height:1.4px;background:rgba(204,204,220,0.08);"></div>
<div class="a" style="left:107px;top:1861.8px;width:3285px;height:1.4px;background:rgba(204,204,220,0.08);"></div>
<div class="a" style="left:107px;top:1917.8px;width:3285px;height:1.4px;background:rgba(204,204,220,0.08);"></div>
<span class="a t" id="t110" style="top:1651.1px;line-height:34px;height:34px;font-size:22.4px;color:#6e9fff;left:117px;-webkit-text-stroke:0.3px currentColor;letter-spacing:0.391px;">Time</span>
<span class="a t" id="t111" style="top:1651.1px;line-height:34px;height:34px;font-size:22.4px;color:#6e9fff;left:481.7px;-webkit-text-stroke:0.3px currentColor;letter-spacing:-0.941px;">__name__</span>
<span class="a t" id="t112" style="top:1651.1px;line-height:34px;height:34px;font-size:22.4px;color:#6e9fff;left:846.7px;-webkit-text-stroke:0.3px currentColor;letter-spacing:0.362px;">instance</span>
<span class="a t" id="t113" style="top:1651.1px;line-height:34px;height:34px;font-size:22.4px;color:#6e9fff;left:1211.7px;-webkit-text-stroke:0.3px currentColor;letter-spacing:0.303px;">job</span>
<span class="a t" id="t114" style="top:1651.1px;line-height:34px;height:34px;font-size:22.4px;color:#6e9fff;left:1576.7px;-webkit-text-stroke:0.3px currentColor;letter-spacing:0.325px;">operation</span>
<span class="a t" id="t115" style="top:1651.1px;line-height:34px;height:34px;font-size:22.4px;color:#6e9fff;left:1941.7px;-webkit-text-stroke:0.3px currentColor;letter-spacing:0.034px;">service_name</span>
<span class="a t" id="t116" style="top:1651.1px;line-height:34px;height:34px;font-size:22.4px;color:#6e9fff;left:2306.7px;-webkit-text-stroke:0.3px currentColor;letter-spacing:0.023px;">span_kind</span>
<span class="a t" id="t117" style="top:1651.1px;line-height:34px;height:34px;font-size:22.4px;color:#6e9fff;left:2671.7px;-webkit-text-stroke:0.3px currentColor;letter-spacing:0.277px;">status_code</span>
<span class="a t" id="t118" style="top:1651.1px;line-height:34px;height:34px;font-size:22.4px;color:#6e9fff;right:40.5px;-webkit-text-stroke:0.3px currentColor;letter-spacing:0.078px;margin-right:-0.078px;">Value</span>
<span class="a t" id="t119" style="top:1704.4px;line-height:34px;height:34px;font-size:22.4px;color:#ccccdc;left:116.7px;-webkit-text-stroke:0.3px currentColor;letter-spacing:0.100px;">2022-10-16 00:22:29.655</span>
<span class="a t" id="t120" style="top:1704.4px;line-height:34px;height:34px;font-size:22.4px;color:#ccccdc;left:481.5px;-webkit-text-stroke:0.3px currentColor;letter-spacing:0.357px;">calls_total</span>
<span class="a t" id="t121" style="top:1704.4px;line-height:34px;height:34px;font-size:22.4px;color:#ccccdc;left:846.5px;-webkit-text-stroke:0.3px currentColor;letter-spacing:0.395px;">otelcol:9464</span>
<span class="a t" id="t122" style="top:1704.4px;line-height:34px;height:34px;font-size:22.4px;color:#ccccdc;left:1211.5px;-webkit-text-stroke:0.3px currentColor;letter-spacing:0.473px;">otel</span>
<span class="a t" id="t123" style="top:1704.4px;line-height:34px;height:34px;font-size:22.4px;color:#ccccdc;left:1577px;-webkit-text-stroke:0.3px currentColor;letter-spacing:0.766px;">/</span>
<span class="a t" id="t124" style="top:1704.4px;line-height:34px;height:34px;font-size:22.4px;color:#ccccdc;left:1942px;-webkit-text-stroke:0.3px currentColor;letter-spacing:0.320px;">featureflagservice</span>
<span class="a t" id="t125" style="top:1704.4px;line-height:34px;height:34px;font-size:22.4px;color:#ccccdc;left:2306.7px;-webkit-text-stroke:0.3px currentColor;letter-spacing:-1.131px;">SPAN_KIND_SERVER</span>
<span class="a t" id="t126" style="top:1704.4px;line-height:34px;height:34px;font-size:22.4px;color:#ccccdc;left:2671.7px;-webkit-text-stroke:0.3px currentColor;letter-spacing:-1.158px;">STATUS_CODE_UNSET</span>
<span class="a t" id="t127" style="top:1704.4px;line-height:34px;height:34px;font-size:22.4px;color:#ccccdc;right:34.5px;-webkit-text-stroke:0.3px currentColor;letter-spacing:-0.453px;margin-right:0.453px;">2</span>
<span class="a t" id="t128" style="top:1760.4px;line-height:34px;height:34px;font-size:22.4px;color:#ccccdc;left:116.7px;-webkit-text-stroke:0.3px currentColor;letter-spacing:0.100px;">2022-10-16 00:22:29.655</span>
<span class="a t" id="t129" style="top:1760.4px;line-height:34px;height:34px;font-size:22.4px;color:#ccccdc;left:481.5px;-webkit-text-stroke:0.3px currentColor;letter-spacing:0.357px;">calls_total</span>
<span class="a t" id="t130" style="top:1760.4px;line-height:34px;height:34px;font-size:22.4px;color:#ccccdc;left:846.5px;-webkit-text-stroke:0.3px currentColor;letter-spacing:0.395px;">otelcol:9464</span>
<span class="a t" id="t131" style="top:1760.4px;line-height:34px;height:34px;font-size:22.4px;color:#ccccdc;left:1211.5px;-webkit-text-stroke:0.3px currentColor;letter-spacing:0.473px;">otel</span>
<span class="a t" id="t132" style="top:1760.4px;line-height:34px;height:34px;font-size:22.4px;color:#ccccdc;left:1577px;-webkit-text-stroke:0.3px currentColor;letter-spacing:0.623px;">/getquote</span>
<span class="a t" id="t133" style="top:1760.4px;line-height:34px;height:34px;font-size:22.4px;color:#ccccdc;left:1942px;-webkit-text-stroke:0.3px currentColor;letter-spacing:0.211px;">quoteservice</span>
<span class="a t" id="t134" style="top:1760.4px;line-height:34px;height:34px;font-size:22.4px;color:#ccccdc;left:2306.7px;-webkit-text-stroke:0.3px currentColor;letter-spacing:-1.131px;">SPAN_KIND_SERVER</span>
<span class="a t" id="t135" style="top:1760.4px;line-height:34px;height:34px;font-size:22.4px;color:#ccccdc;left:2671.7px;-webkit-text-stroke:0.3px currentColor;letter-spacing:-1.225px;">STATUS_CODE_OK</span>
<span class="a t" id="t136" style="top:1760.4px;line-height:34px;height:34px;font-size:22.4px;color:#ccccdc;right:34.5px;-webkit-text-stroke:0.3px currentColor;letter-spacing:0.047px;margin-right:-0.047px;">432</span>
<span class="a t" id="t137" style="top:1816.4px;line-height:34px;height:34px;font-size:22.4px;color:#ccccdc;left:116.7px;-webkit-text-stroke:0.3px currentColor;letter-spacing:0.100px;">2022-10-16 00:22:29.655</span>
<span class="a t" id="t138" style="top:1816.4px;line-height:34px;height:34px;font-size:22.4px;color:#ccccdc;left:481.5px;-webkit-text-stroke:0.3px currentColor;letter-spacing:0.357px;">calls_total</span>
<span class="a t" id="t139" style="top:1816.4px;line-height:34px;height:34px;font-size:22.4px;color:#ccccdc;left:846.5px;-webkit-text-stroke:0.3px currentColor;letter-spacing:0.395px;">otelcol:9464</span>
<span class="a t" id="t140" style="top:1816.4px;line-height:34px;height:34px;font-size:22.4px;color:#ccccdc;left:1211.5px;-webkit-text-stroke:0.3px currentColor;letter-spacing:0.473px;">otel</span>
<span class="a t" id="t141" style="top:1816.4px;line-height:34px;height:34px;font-size:22.4px;color:#ccccdc;left:1577px;-webkit-text-stroke:0.3px currentColor;letter-spacing:-0.061px;">/hipstershop.FeatureFlagServi…</span>
<span class="a t" id="t142" style="top:1816.4px;line-height:34px;height:34px;font-size:22.4px;color:#ccccdc;left:1942px;-webkit-text-stroke:0.3px currentColor;letter-spacing:0.320px;">featureflagservice</span>
<span class="a t" id="t143" style="top:1816.4px;line-height:34px;height:34px;font-size:22.4px;color:#ccccdc;left:2306.7px;-webkit-text-stroke:0.3px currentColor;letter-spacing:-0.731px;">SPAN_KIND_INTERNAL</span>
<span class="a t" id="t144" style="top:1816.4px;line-height:34px;height:34px;font-size:22.4px;color:#ccccdc;left:2671.7px;-webkit-text-stroke:0.3px currentColor;letter-spacing:-1.158px;">STATUS_CODE_UNSET</span>
<span class="a t" id="t145" style="top:1816.4px;line-height:34px;height:34px;font-size:22.4px;color:#ccccdc;right:34.5px;-webkit-text-stroke:0.3px currentColor;letter-spacing:0.047px;margin-right:-0.047px;">182</span>
<span class="a t" id="t146" style="top:1872.4px;line-height:34px;height:34px;font-size:22.4px;color:#ccccdc;left:116.7px;-webkit-text-stroke:0.3px currentColor;letter-spacing:0.100px;">2022-10-16 00:22:29.655</span>
<span class="a t" id="t147" style="top:1872.4px;line-height:34px;height:34px;font-size:22.4px;color:#ccccdc;left:481.5px;-webkit-text-stroke:0.3px currentColor;letter-spacing:0.357px;">calls_total</span>
<span class="a t" id="t148" style="top:1872.4px;line-height:34px;height:34px;font-size:22.4px;color:#ccccdc;left:846.5px;-webkit-text-stroke:0.3px currentColor;letter-spacing:0.395px;">otelcol:9464</span>
<span class="a t" id="t149" style="top:1872.4px;line-height:34px;height:34px;font-size:22.4px;color:#ccccdc;left:1211.5px;-webkit-text-stroke:0.3px currentColor;letter-spacing:0.473px;">otel</span>
<span class="a t" id="t150" style="top:1872.4px;line-height:34px;height:34px;font-size:22.4px;color:#ccccdc;left:1577px;-webkit-text-stroke:0.3px currentColor;letter-spacing:0.073px;">/hipstershop.ProductCatalogS…</span>
<span class="a t" id="t151" style="top:1872.4px;line-height:34px;height:34px;font-size:22.4px;color:#ccccdc;left:1942px;-webkit-text-stroke:0.3px currentColor;letter-spacing:0.347px;">recommendationservice</span>
<span class="a t" id="t152" style="top:1872.4px;line-height:34px;height:34px;font-size:22.4px;color:#ccccdc;left:2306.7px;-webkit-text-stroke:0.3px currentColor;letter-spacing:-0.784px;">SPAN_KIND_CLIENT</span>
<span class="a t" id="t153" style="top:1872.4px;line-height:34px;height:34px;font-size:22.4px;color:#ccccdc;left:2671.7px;-webkit-text-stroke:0.3px currentColor;letter-spacing:-1.158px;">STATUS_CODE_UNSET</span>
<span class="a t" id="t154" style="top:1872.4px;line-height:34px;height:34px;font-size:22.4px;color:#ccccdc;right:34.5px;-webkit-text-stroke:0.3px currentColor;letter-spacing:0.047px;margin-right:-0.047px;">621</span>
<span class="a t" id="t155" style="top:1928.4px;line-height:34px;height:34px;font-size:22.4px;color:#ccccdc;left:116.7px;-webkit-text-stroke:0.3px currentColor;letter-spacing:0.100px;">2022-10-16 00:22:29.655</span>
<span class="a t" id="t156" style="top:1928.4px;line-height:34px;height:34px;font-size:22.4px;color:#ccccdc;left:481.5px;-webkit-text-stroke:0.3px currentColor;letter-spacing:0.357px;">calls_total</span>
<span class="a t" id="t157" style="top:1928.4px;line-height:34px;height:34px;font-size:22.4px;color:#ccccdc;left:846.5px;-webkit-text-stroke:0.3px currentColor;letter-spacing:0.395px;">otelcol:9464</span>
<span class="a t" id="t158" style="top:1928.4px;line-height:34px;height:34px;font-size:22.4px;color:#ccccdc;left:1211.5px;-webkit-text-stroke:0.3px currentColor;letter-spacing:0.473px;">otel</span>
<span class="a t" id="t159" style="top:1928.4px;line-height:34px;height:34px;font-size:22.4px;color:#ccccdc;left:1577px;-webkit-text-stroke:0.3px currentColor;letter-spacing:-0.396px;">/hipstershop.Recommendation…</span>
<span class="a t" id="t160" style="top:1928.4px;line-height:34px;height:34px;font-size:22.4px;color:#ccccdc;left:1942px;-webkit-text-stroke:0.3px currentColor;letter-spacing:0.347px;">recommendationservice</span>
<span class="a t" id="t161" style="top:1928.4px;line-height:34px;height:34px;font-size:22.4px;color:#ccccdc;left:2306.7px;-webkit-text-stroke:0.3px currentColor;letter-spacing:-1.131px;">SPAN_KIND_SERVER</span>
<span class="a t" id="t162" style="top:1928.4px;line-height:34px;height:34px;font-size:22.4px;color:#ccccdc;left:2671.7px;-webkit-text-stroke:0.3px currentColor;letter-spacing:-1.158px;">STATUS_CODE_UNSET</span>
<span class="a t" id="t163" style="top:1928.4px;line-height:34px;height:34px;font-size:22.4px;color:#ccccdc;right:34.5px;-webkit-text-stroke:0.3px currentColor;letter-spacing:0.047px;margin-right:-0.047px;">621</span>
</div></body></html>
